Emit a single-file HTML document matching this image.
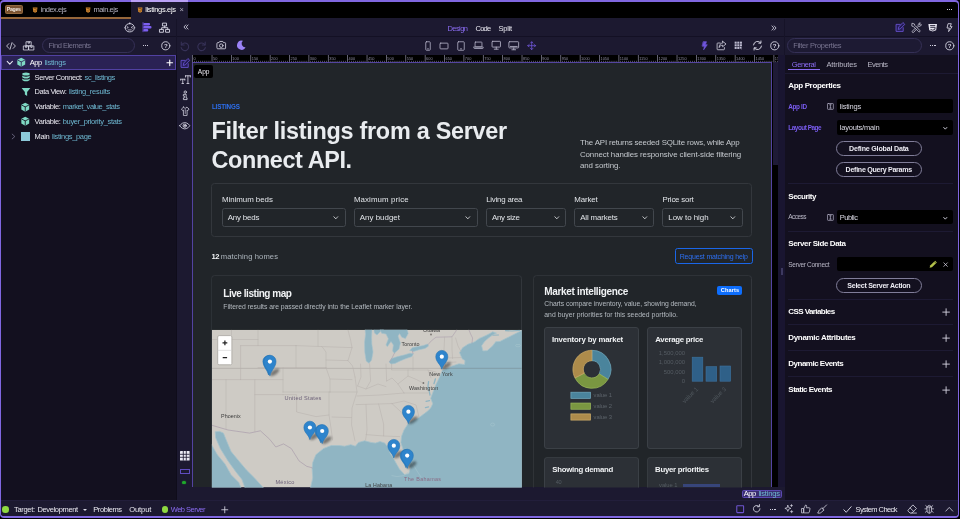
<!DOCTYPE html>
<html lang="en"><head><meta charset="utf-8"><title>listings.ejs</title>
<style>
html,body{margin:0;padding:0;background:#000;}
body{width:960px;height:519px;overflow:hidden;position:relative;font-family:"Liberation Sans",sans-serif;}
#app{position:absolute;left:0;top:0;width:960px;height:519px;overflow:hidden;will-change:transform;}
.a{position:absolute;box-sizing:border-box;}
.t{position:absolute;white-space:nowrap;line-height:1;}
.r685{left:auto !important;right:275px;}
svg{overflow:visible;}
</style></head>
<body>
<div id="app">
<div class="a" style="left:0;top:0;width:959.4px;height:518.1px;background:#8067e0;border-radius:4px;"></div>
<div class="a" style="left:1.3px;top:1.5px;width:956.3px;height:514.8px;background:#000;border-radius:3px;overflow:hidden;"></div>
<div class="a" style="left:4.70px;top:5.20px;width:18.40px;height:8.70px;background:#7a5331;border:0.6px solid #94693f;border-radius:1.5px;"></div>
<div class="a" style="left:946.80px;top:8.80px;width:1.15px;height:1.15px;background:#cfcedd;"></div>
<div class="a" style="left:949.00px;top:8.80px;width:1.15px;height:1.15px;background:#cfcedd;"></div>
<div class="a" style="left:951.20px;top:8.80px;width:1.15px;height:1.15px;background:#cfcedd;"></div>
<div class="a" style="left:1.30px;top:17.80px;width:956.30px;height:37.20px;background:#1c1930;"></div>
<div class="a" style="left:1.30px;top:17.30px;width:130.00px;height:1.40px;background:#96673a;"></div>
<div class="a" style="left:131.30px;top:1.50px;width:57.20px;height:17.50px;background:#1c1930;"></div>
<div class="a" style="left:131.30px;top:0.00px;width:57.20px;height:1.50px;background:#b9a0f5;"></div>
<div class="a" style="left:1.30px;top:35.60px;width:956.30px;height:0.80px;background:#131024;"></div>
<div class="a" style="left:175.60px;top:19.00px;width:0.80px;height:36.00px;background:#161328;"></div>
<div class="a" style="left:784.20px;top:19.00px;width:0.80px;height:36.00px;background:#161328;"></div>
<div class="a" style="left:1.30px;top:55.00px;width:174.70px;height:444.90px;background:#13101f;"></div>
<div class="a" style="left:176.00px;top:55.00px;width:16.00px;height:444.90px;background:#1c1930;"></div>
<div class="a" style="left:175.50px;top:55.00px;width:0.80px;height:444.90px;background:#0f0c1a;"></div>
<div class="a" style="left:192.00px;top:487.40px;width:593.00px;height:12.50px;background:#1c1930;"></div>
<div class="a" style="left:778.00px;top:55.00px;width:6.60px;height:432.40px;background:#191530;"></div>
<div class="a" style="left:784.60px;top:55.00px;width:173.00px;height:444.90px;background:#13101f;"></div>
<div class="a" style="left:1.30px;top:499.80px;width:956.30px;height:16.50px;background:#1c1930;border-top:0.7px solid #221e3b;border-radius:0 0 3px 3px;"></div>
<div class="a" style="left:192.00px;top:54.50px;width:586.00px;height:7.70px;background:#000;"></div>
<div class="a" style="left:191.60px;top:62.10px;width:580.90px;height:425.30px;background:#5343a0;"></div>
<div class="a" style="left:193.10px;top:63.40px;width:578.00px;height:424.00px;background:#212529;"></div>
<div class="a" style="left:772.60px;top:62.20px;width:5.40px;height:103.00px;background:#1e1a36;"></div>
<div class="a" style="left:772.60px;top:165.20px;width:5.40px;height:322.20px;background:#000;"></div>
<svg class="a" style="left:0;top:0;clip-path:inset(54.5px 182px 456px 192px);" width="960" height="519" viewBox="0 0 960 519"><rect x="192.30" y="55" width="0.7" height="7.2" fill="#8f8da2"/><text x="193.60" y="60.0" font-size="3.9" fill="#8f8da2" font-family="Liberation Sans, sans-serif">0</text><rect x="194.24" y="60.8" width="0.55" height="1.3" fill="#8a88a0"/><rect x="196.18" y="60.8" width="0.55" height="1.3" fill="#8a88a0"/><rect x="198.11" y="60.8" width="0.55" height="1.3" fill="#8a88a0"/><rect x="200.05" y="60.8" width="0.55" height="1.3" fill="#8a88a0"/><rect x="201.99" y="60.8" width="0.55" height="1.3" fill="#8a88a0"/><rect x="203.93" y="60.8" width="0.55" height="1.3" fill="#8a88a0"/><rect x="205.86" y="60.8" width="0.55" height="1.3" fill="#8a88a0"/><rect x="207.80" y="60.8" width="0.55" height="1.3" fill="#8a88a0"/><rect x="209.74" y="60.8" width="0.55" height="1.3" fill="#8a88a0"/><rect x="211.68" y="55" width="0.7" height="7.2" fill="#8f8da2"/><text x="212.98" y="60.0" font-size="3.9" fill="#8f8da2" font-family="Liberation Sans, sans-serif">50</text><rect x="213.61" y="60.8" width="0.55" height="1.3" fill="#8a88a0"/><rect x="215.55" y="60.8" width="0.55" height="1.3" fill="#8a88a0"/><rect x="217.49" y="60.8" width="0.55" height="1.3" fill="#8a88a0"/><rect x="219.43" y="60.8" width="0.55" height="1.3" fill="#8a88a0"/><rect x="221.36" y="60.8" width="0.55" height="1.3" fill="#8a88a0"/><rect x="223.30" y="60.8" width="0.55" height="1.3" fill="#8a88a0"/><rect x="225.24" y="60.8" width="0.55" height="1.3" fill="#8a88a0"/><rect x="227.18" y="60.8" width="0.55" height="1.3" fill="#8a88a0"/><rect x="229.11" y="60.8" width="0.55" height="1.3" fill="#8a88a0"/><rect x="231.05" y="55" width="0.7" height="7.2" fill="#8f8da2"/><text x="232.35" y="60.0" font-size="3.9" fill="#8f8da2" font-family="Liberation Sans, sans-serif">100</text><rect x="232.99" y="60.8" width="0.55" height="1.3" fill="#8a88a0"/><rect x="234.93" y="60.8" width="0.55" height="1.3" fill="#8a88a0"/><rect x="236.86" y="60.8" width="0.55" height="1.3" fill="#8a88a0"/><rect x="238.80" y="60.8" width="0.55" height="1.3" fill="#8a88a0"/><rect x="240.74" y="60.8" width="0.55" height="1.3" fill="#8a88a0"/><rect x="242.68" y="60.8" width="0.55" height="1.3" fill="#8a88a0"/><rect x="244.61" y="60.8" width="0.55" height="1.3" fill="#8a88a0"/><rect x="246.55" y="60.8" width="0.55" height="1.3" fill="#8a88a0"/><rect x="248.49" y="60.8" width="0.55" height="1.3" fill="#8a88a0"/><rect x="250.43" y="55" width="0.7" height="7.2" fill="#8f8da2"/><text x="251.73" y="60.0" font-size="3.9" fill="#8f8da2" font-family="Liberation Sans, sans-serif">150</text><rect x="252.36" y="60.8" width="0.55" height="1.3" fill="#8a88a0"/><rect x="254.30" y="60.8" width="0.55" height="1.3" fill="#8a88a0"/><rect x="256.24" y="60.8" width="0.55" height="1.3" fill="#8a88a0"/><rect x="258.18" y="60.8" width="0.55" height="1.3" fill="#8a88a0"/><rect x="260.11" y="60.8" width="0.55" height="1.3" fill="#8a88a0"/><rect x="262.05" y="60.8" width="0.55" height="1.3" fill="#8a88a0"/><rect x="263.99" y="60.8" width="0.55" height="1.3" fill="#8a88a0"/><rect x="265.93" y="60.8" width="0.55" height="1.3" fill="#8a88a0"/><rect x="267.86" y="60.8" width="0.55" height="1.3" fill="#8a88a0"/><rect x="269.80" y="55" width="0.7" height="7.2" fill="#8f8da2"/><text x="271.10" y="60.0" font-size="3.9" fill="#8f8da2" font-family="Liberation Sans, sans-serif">200</text><rect x="271.74" y="60.8" width="0.55" height="1.3" fill="#8a88a0"/><rect x="273.68" y="60.8" width="0.55" height="1.3" fill="#8a88a0"/><rect x="275.61" y="60.8" width="0.55" height="1.3" fill="#8a88a0"/><rect x="277.55" y="60.8" width="0.55" height="1.3" fill="#8a88a0"/><rect x="279.49" y="60.8" width="0.55" height="1.3" fill="#8a88a0"/><rect x="281.43" y="60.8" width="0.55" height="1.3" fill="#8a88a0"/><rect x="283.36" y="60.8" width="0.55" height="1.3" fill="#8a88a0"/><rect x="285.30" y="60.8" width="0.55" height="1.3" fill="#8a88a0"/><rect x="287.24" y="60.8" width="0.55" height="1.3" fill="#8a88a0"/><rect x="289.18" y="55" width="0.7" height="7.2" fill="#8f8da2"/><text x="290.48" y="60.0" font-size="3.9" fill="#8f8da2" font-family="Liberation Sans, sans-serif">250</text><rect x="291.11" y="60.8" width="0.55" height="1.3" fill="#8a88a0"/><rect x="293.05" y="60.8" width="0.55" height="1.3" fill="#8a88a0"/><rect x="294.99" y="60.8" width="0.55" height="1.3" fill="#8a88a0"/><rect x="296.93" y="60.8" width="0.55" height="1.3" fill="#8a88a0"/><rect x="298.86" y="60.8" width="0.55" height="1.3" fill="#8a88a0"/><rect x="300.80" y="60.8" width="0.55" height="1.3" fill="#8a88a0"/><rect x="302.74" y="60.8" width="0.55" height="1.3" fill="#8a88a0"/><rect x="304.68" y="60.8" width="0.55" height="1.3" fill="#8a88a0"/><rect x="306.61" y="60.8" width="0.55" height="1.3" fill="#8a88a0"/><rect x="308.55" y="55" width="0.7" height="7.2" fill="#8f8da2"/><text x="309.85" y="60.0" font-size="3.9" fill="#8f8da2" font-family="Liberation Sans, sans-serif">300</text><rect x="310.49" y="60.8" width="0.55" height="1.3" fill="#8a88a0"/><rect x="312.43" y="60.8" width="0.55" height="1.3" fill="#8a88a0"/><rect x="314.36" y="60.8" width="0.55" height="1.3" fill="#8a88a0"/><rect x="316.30" y="60.8" width="0.55" height="1.3" fill="#8a88a0"/><rect x="318.24" y="60.8" width="0.55" height="1.3" fill="#8a88a0"/><rect x="320.18" y="60.8" width="0.55" height="1.3" fill="#8a88a0"/><rect x="322.11" y="60.8" width="0.55" height="1.3" fill="#8a88a0"/><rect x="324.05" y="60.8" width="0.55" height="1.3" fill="#8a88a0"/><rect x="325.99" y="60.8" width="0.55" height="1.3" fill="#8a88a0"/><rect x="327.93" y="55" width="0.7" height="7.2" fill="#8f8da2"/><text x="329.23" y="60.0" font-size="3.9" fill="#8f8da2" font-family="Liberation Sans, sans-serif">350</text><rect x="329.86" y="60.8" width="0.55" height="1.3" fill="#8a88a0"/><rect x="331.80" y="60.8" width="0.55" height="1.3" fill="#8a88a0"/><rect x="333.74" y="60.8" width="0.55" height="1.3" fill="#8a88a0"/><rect x="335.68" y="60.8" width="0.55" height="1.3" fill="#8a88a0"/><rect x="337.61" y="60.8" width="0.55" height="1.3" fill="#8a88a0"/><rect x="339.55" y="60.8" width="0.55" height="1.3" fill="#8a88a0"/><rect x="341.49" y="60.8" width="0.55" height="1.3" fill="#8a88a0"/><rect x="343.43" y="60.8" width="0.55" height="1.3" fill="#8a88a0"/><rect x="345.36" y="60.8" width="0.55" height="1.3" fill="#8a88a0"/><rect x="347.30" y="55" width="0.7" height="7.2" fill="#8f8da2"/><text x="348.60" y="60.0" font-size="3.9" fill="#8f8da2" font-family="Liberation Sans, sans-serif">400</text><rect x="349.24" y="60.8" width="0.55" height="1.3" fill="#8a88a0"/><rect x="351.18" y="60.8" width="0.55" height="1.3" fill="#8a88a0"/><rect x="353.11" y="60.8" width="0.55" height="1.3" fill="#8a88a0"/><rect x="355.05" y="60.8" width="0.55" height="1.3" fill="#8a88a0"/><rect x="356.99" y="60.8" width="0.55" height="1.3" fill="#8a88a0"/><rect x="358.93" y="60.8" width="0.55" height="1.3" fill="#8a88a0"/><rect x="360.86" y="60.8" width="0.55" height="1.3" fill="#8a88a0"/><rect x="362.80" y="60.8" width="0.55" height="1.3" fill="#8a88a0"/><rect x="364.74" y="60.8" width="0.55" height="1.3" fill="#8a88a0"/><rect x="366.68" y="55" width="0.7" height="7.2" fill="#8f8da2"/><text x="367.98" y="60.0" font-size="3.9" fill="#8f8da2" font-family="Liberation Sans, sans-serif">450</text><rect x="368.61" y="60.8" width="0.55" height="1.3" fill="#8a88a0"/><rect x="370.55" y="60.8" width="0.55" height="1.3" fill="#8a88a0"/><rect x="372.49" y="60.8" width="0.55" height="1.3" fill="#8a88a0"/><rect x="374.43" y="60.8" width="0.55" height="1.3" fill="#8a88a0"/><rect x="376.36" y="60.8" width="0.55" height="1.3" fill="#8a88a0"/><rect x="378.30" y="60.8" width="0.55" height="1.3" fill="#8a88a0"/><rect x="380.24" y="60.8" width="0.55" height="1.3" fill="#8a88a0"/><rect x="382.18" y="60.8" width="0.55" height="1.3" fill="#8a88a0"/><rect x="384.11" y="60.8" width="0.55" height="1.3" fill="#8a88a0"/><rect x="386.05" y="55" width="0.7" height="7.2" fill="#8f8da2"/><text x="387.35" y="60.0" font-size="3.9" fill="#8f8da2" font-family="Liberation Sans, sans-serif">500</text><rect x="387.99" y="60.8" width="0.55" height="1.3" fill="#8a88a0"/><rect x="389.93" y="60.8" width="0.55" height="1.3" fill="#8a88a0"/><rect x="391.86" y="60.8" width="0.55" height="1.3" fill="#8a88a0"/><rect x="393.80" y="60.8" width="0.55" height="1.3" fill="#8a88a0"/><rect x="395.74" y="60.8" width="0.55" height="1.3" fill="#8a88a0"/><rect x="397.68" y="60.8" width="0.55" height="1.3" fill="#8a88a0"/><rect x="399.61" y="60.8" width="0.55" height="1.3" fill="#8a88a0"/><rect x="401.55" y="60.8" width="0.55" height="1.3" fill="#8a88a0"/><rect x="403.49" y="60.8" width="0.55" height="1.3" fill="#8a88a0"/><rect x="405.43" y="55" width="0.7" height="7.2" fill="#8f8da2"/><text x="406.73" y="60.0" font-size="3.9" fill="#8f8da2" font-family="Liberation Sans, sans-serif">550</text><rect x="407.36" y="60.8" width="0.55" height="1.3" fill="#8a88a0"/><rect x="409.30" y="60.8" width="0.55" height="1.3" fill="#8a88a0"/><rect x="411.24" y="60.8" width="0.55" height="1.3" fill="#8a88a0"/><rect x="413.18" y="60.8" width="0.55" height="1.3" fill="#8a88a0"/><rect x="415.11" y="60.8" width="0.55" height="1.3" fill="#8a88a0"/><rect x="417.05" y="60.8" width="0.55" height="1.3" fill="#8a88a0"/><rect x="418.99" y="60.8" width="0.55" height="1.3" fill="#8a88a0"/><rect x="420.93" y="60.8" width="0.55" height="1.3" fill="#8a88a0"/><rect x="422.86" y="60.8" width="0.55" height="1.3" fill="#8a88a0"/><rect x="424.80" y="55" width="0.7" height="7.2" fill="#8f8da2"/><text x="426.10" y="60.0" font-size="3.9" fill="#8f8da2" font-family="Liberation Sans, sans-serif">600</text><rect x="426.74" y="60.8" width="0.55" height="1.3" fill="#8a88a0"/><rect x="428.68" y="60.8" width="0.55" height="1.3" fill="#8a88a0"/><rect x="430.61" y="60.8" width="0.55" height="1.3" fill="#8a88a0"/><rect x="432.55" y="60.8" width="0.55" height="1.3" fill="#8a88a0"/><rect x="434.49" y="60.8" width="0.55" height="1.3" fill="#8a88a0"/><rect x="436.43" y="60.8" width="0.55" height="1.3" fill="#8a88a0"/><rect x="438.36" y="60.8" width="0.55" height="1.3" fill="#8a88a0"/><rect x="440.30" y="60.8" width="0.55" height="1.3" fill="#8a88a0"/><rect x="442.24" y="60.8" width="0.55" height="1.3" fill="#8a88a0"/><rect x="444.18" y="55" width="0.7" height="7.2" fill="#8f8da2"/><text x="445.48" y="60.0" font-size="3.9" fill="#8f8da2" font-family="Liberation Sans, sans-serif">650</text><rect x="446.11" y="60.8" width="0.55" height="1.3" fill="#8a88a0"/><rect x="448.05" y="60.8" width="0.55" height="1.3" fill="#8a88a0"/><rect x="449.99" y="60.8" width="0.55" height="1.3" fill="#8a88a0"/><rect x="451.93" y="60.8" width="0.55" height="1.3" fill="#8a88a0"/><rect x="453.86" y="60.8" width="0.55" height="1.3" fill="#8a88a0"/><rect x="455.80" y="60.8" width="0.55" height="1.3" fill="#8a88a0"/><rect x="457.74" y="60.8" width="0.55" height="1.3" fill="#8a88a0"/><rect x="459.68" y="60.8" width="0.55" height="1.3" fill="#8a88a0"/><rect x="461.61" y="60.8" width="0.55" height="1.3" fill="#8a88a0"/><rect x="463.55" y="55" width="0.7" height="7.2" fill="#8f8da2"/><text x="464.85" y="60.0" font-size="3.9" fill="#8f8da2" font-family="Liberation Sans, sans-serif">700</text><rect x="465.49" y="60.8" width="0.55" height="1.3" fill="#8a88a0"/><rect x="467.43" y="60.8" width="0.55" height="1.3" fill="#8a88a0"/><rect x="469.36" y="60.8" width="0.55" height="1.3" fill="#8a88a0"/><rect x="471.30" y="60.8" width="0.55" height="1.3" fill="#8a88a0"/><rect x="473.24" y="60.8" width="0.55" height="1.3" fill="#8a88a0"/><rect x="475.18" y="60.8" width="0.55" height="1.3" fill="#8a88a0"/><rect x="477.11" y="60.8" width="0.55" height="1.3" fill="#8a88a0"/><rect x="479.05" y="60.8" width="0.55" height="1.3" fill="#8a88a0"/><rect x="480.99" y="60.8" width="0.55" height="1.3" fill="#8a88a0"/><rect x="482.93" y="55" width="0.7" height="7.2" fill="#8f8da2"/><text x="484.23" y="60.0" font-size="3.9" fill="#8f8da2" font-family="Liberation Sans, sans-serif">750</text><rect x="484.86" y="60.8" width="0.55" height="1.3" fill="#8a88a0"/><rect x="486.80" y="60.8" width="0.55" height="1.3" fill="#8a88a0"/><rect x="488.74" y="60.8" width="0.55" height="1.3" fill="#8a88a0"/><rect x="490.68" y="60.8" width="0.55" height="1.3" fill="#8a88a0"/><rect x="492.61" y="60.8" width="0.55" height="1.3" fill="#8a88a0"/><rect x="494.55" y="60.8" width="0.55" height="1.3" fill="#8a88a0"/><rect x="496.49" y="60.8" width="0.55" height="1.3" fill="#8a88a0"/><rect x="498.43" y="60.8" width="0.55" height="1.3" fill="#8a88a0"/><rect x="500.36" y="60.8" width="0.55" height="1.3" fill="#8a88a0"/><rect x="502.30" y="55" width="0.7" height="7.2" fill="#8f8da2"/><text x="503.60" y="60.0" font-size="3.9" fill="#8f8da2" font-family="Liberation Sans, sans-serif">800</text><rect x="504.24" y="60.8" width="0.55" height="1.3" fill="#8a88a0"/><rect x="506.18" y="60.8" width="0.55" height="1.3" fill="#8a88a0"/><rect x="508.11" y="60.8" width="0.55" height="1.3" fill="#8a88a0"/><rect x="510.05" y="60.8" width="0.55" height="1.3" fill="#8a88a0"/><rect x="511.99" y="60.8" width="0.55" height="1.3" fill="#8a88a0"/><rect x="513.92" y="60.8" width="0.55" height="1.3" fill="#8a88a0"/><rect x="515.86" y="60.8" width="0.55" height="1.3" fill="#8a88a0"/><rect x="517.80" y="60.8" width="0.55" height="1.3" fill="#8a88a0"/><rect x="519.74" y="60.8" width="0.55" height="1.3" fill="#8a88a0"/><rect x="521.67" y="55" width="0.7" height="7.2" fill="#8f8da2"/><text x="522.97" y="60.0" font-size="3.9" fill="#8f8da2" font-family="Liberation Sans, sans-serif">850</text><rect x="523.61" y="60.8" width="0.55" height="1.3" fill="#8a88a0"/><rect x="525.55" y="60.8" width="0.55" height="1.3" fill="#8a88a0"/><rect x="527.49" y="60.8" width="0.55" height="1.3" fill="#8a88a0"/><rect x="529.42" y="60.8" width="0.55" height="1.3" fill="#8a88a0"/><rect x="531.36" y="60.8" width="0.55" height="1.3" fill="#8a88a0"/><rect x="533.30" y="60.8" width="0.55" height="1.3" fill="#8a88a0"/><rect x="535.24" y="60.8" width="0.55" height="1.3" fill="#8a88a0"/><rect x="537.17" y="60.8" width="0.55" height="1.3" fill="#8a88a0"/><rect x="539.11" y="60.8" width="0.55" height="1.3" fill="#8a88a0"/><rect x="541.05" y="55" width="0.7" height="7.2" fill="#8f8da2"/><text x="542.35" y="60.0" font-size="3.9" fill="#8f8da2" font-family="Liberation Sans, sans-serif">900</text><rect x="542.99" y="60.8" width="0.55" height="1.3" fill="#8a88a0"/><rect x="544.92" y="60.8" width="0.55" height="1.3" fill="#8a88a0"/><rect x="546.86" y="60.8" width="0.55" height="1.3" fill="#8a88a0"/><rect x="548.80" y="60.8" width="0.55" height="1.3" fill="#8a88a0"/><rect x="550.74" y="60.8" width="0.55" height="1.3" fill="#8a88a0"/><rect x="552.67" y="60.8" width="0.55" height="1.3" fill="#8a88a0"/><rect x="554.61" y="60.8" width="0.55" height="1.3" fill="#8a88a0"/><rect x="556.55" y="60.8" width="0.55" height="1.3" fill="#8a88a0"/><rect x="558.49" y="60.8" width="0.55" height="1.3" fill="#8a88a0"/><rect x="560.42" y="55" width="0.7" height="7.2" fill="#8f8da2"/><text x="561.72" y="60.0" font-size="3.9" fill="#8f8da2" font-family="Liberation Sans, sans-serif">950</text><rect x="562.36" y="60.8" width="0.55" height="1.3" fill="#8a88a0"/><rect x="564.30" y="60.8" width="0.55" height="1.3" fill="#8a88a0"/><rect x="566.24" y="60.8" width="0.55" height="1.3" fill="#8a88a0"/><rect x="568.17" y="60.8" width="0.55" height="1.3" fill="#8a88a0"/><rect x="570.11" y="60.8" width="0.55" height="1.3" fill="#8a88a0"/><rect x="572.05" y="60.8" width="0.55" height="1.3" fill="#8a88a0"/><rect x="573.99" y="60.8" width="0.55" height="1.3" fill="#8a88a0"/><rect x="575.92" y="60.8" width="0.55" height="1.3" fill="#8a88a0"/><rect x="577.86" y="60.8" width="0.55" height="1.3" fill="#8a88a0"/><rect x="579.80" y="55" width="0.7" height="7.2" fill="#8f8da2"/><text x="581.10" y="60.0" font-size="3.9" fill="#8f8da2" font-family="Liberation Sans, sans-serif">1000</text><rect x="581.74" y="60.8" width="0.55" height="1.3" fill="#8a88a0"/><rect x="583.67" y="60.8" width="0.55" height="1.3" fill="#8a88a0"/><rect x="585.61" y="60.8" width="0.55" height="1.3" fill="#8a88a0"/><rect x="587.55" y="60.8" width="0.55" height="1.3" fill="#8a88a0"/><rect x="589.49" y="60.8" width="0.55" height="1.3" fill="#8a88a0"/><rect x="591.42" y="60.8" width="0.55" height="1.3" fill="#8a88a0"/><rect x="593.36" y="60.8" width="0.55" height="1.3" fill="#8a88a0"/><rect x="595.30" y="60.8" width="0.55" height="1.3" fill="#8a88a0"/><rect x="597.24" y="60.8" width="0.55" height="1.3" fill="#8a88a0"/><rect x="599.17" y="55" width="0.7" height="7.2" fill="#8f8da2"/><text x="600.47" y="60.0" font-size="3.9" fill="#8f8da2" font-family="Liberation Sans, sans-serif">1050</text><rect x="601.11" y="60.8" width="0.55" height="1.3" fill="#8a88a0"/><rect x="603.05" y="60.8" width="0.55" height="1.3" fill="#8a88a0"/><rect x="604.99" y="60.8" width="0.55" height="1.3" fill="#8a88a0"/><rect x="606.92" y="60.8" width="0.55" height="1.3" fill="#8a88a0"/><rect x="608.86" y="60.8" width="0.55" height="1.3" fill="#8a88a0"/><rect x="610.80" y="60.8" width="0.55" height="1.3" fill="#8a88a0"/><rect x="612.74" y="60.8" width="0.55" height="1.3" fill="#8a88a0"/><rect x="614.67" y="60.8" width="0.55" height="1.3" fill="#8a88a0"/><rect x="616.61" y="60.8" width="0.55" height="1.3" fill="#8a88a0"/><rect x="618.55" y="55" width="0.7" height="7.2" fill="#8f8da2"/><text x="619.85" y="60.0" font-size="3.9" fill="#8f8da2" font-family="Liberation Sans, sans-serif">1100</text><rect x="620.49" y="60.8" width="0.55" height="1.3" fill="#8a88a0"/><rect x="622.42" y="60.8" width="0.55" height="1.3" fill="#8a88a0"/><rect x="624.36" y="60.8" width="0.55" height="1.3" fill="#8a88a0"/><rect x="626.30" y="60.8" width="0.55" height="1.3" fill="#8a88a0"/><rect x="628.24" y="60.8" width="0.55" height="1.3" fill="#8a88a0"/><rect x="630.17" y="60.8" width="0.55" height="1.3" fill="#8a88a0"/><rect x="632.11" y="60.8" width="0.55" height="1.3" fill="#8a88a0"/><rect x="634.05" y="60.8" width="0.55" height="1.3" fill="#8a88a0"/><rect x="635.99" y="60.8" width="0.55" height="1.3" fill="#8a88a0"/><rect x="637.92" y="55" width="0.7" height="7.2" fill="#8f8da2"/><text x="639.22" y="60.0" font-size="3.9" fill="#8f8da2" font-family="Liberation Sans, sans-serif">1150</text><rect x="639.86" y="60.8" width="0.55" height="1.3" fill="#8a88a0"/><rect x="641.80" y="60.8" width="0.55" height="1.3" fill="#8a88a0"/><rect x="643.74" y="60.8" width="0.55" height="1.3" fill="#8a88a0"/><rect x="645.67" y="60.8" width="0.55" height="1.3" fill="#8a88a0"/><rect x="647.61" y="60.8" width="0.55" height="1.3" fill="#8a88a0"/><rect x="649.55" y="60.8" width="0.55" height="1.3" fill="#8a88a0"/><rect x="651.49" y="60.8" width="0.55" height="1.3" fill="#8a88a0"/><rect x="653.42" y="60.8" width="0.55" height="1.3" fill="#8a88a0"/><rect x="655.36" y="60.8" width="0.55" height="1.3" fill="#8a88a0"/><rect x="657.30" y="55" width="0.7" height="7.2" fill="#8f8da2"/><text x="658.60" y="60.0" font-size="3.9" fill="#8f8da2" font-family="Liberation Sans, sans-serif">1200</text><rect x="659.24" y="60.8" width="0.55" height="1.3" fill="#8a88a0"/><rect x="661.17" y="60.8" width="0.55" height="1.3" fill="#8a88a0"/><rect x="663.11" y="60.8" width="0.55" height="1.3" fill="#8a88a0"/><rect x="665.05" y="60.8" width="0.55" height="1.3" fill="#8a88a0"/><rect x="666.99" y="60.8" width="0.55" height="1.3" fill="#8a88a0"/><rect x="668.92" y="60.8" width="0.55" height="1.3" fill="#8a88a0"/><rect x="670.86" y="60.8" width="0.55" height="1.3" fill="#8a88a0"/><rect x="672.80" y="60.8" width="0.55" height="1.3" fill="#8a88a0"/><rect x="674.74" y="60.8" width="0.55" height="1.3" fill="#8a88a0"/><rect x="676.67" y="55" width="0.7" height="7.2" fill="#8f8da2"/><text x="677.97" y="60.0" font-size="3.9" fill="#8f8da2" font-family="Liberation Sans, sans-serif">1250</text><rect x="678.61" y="60.8" width="0.55" height="1.3" fill="#8a88a0"/><rect x="680.55" y="60.8" width="0.55" height="1.3" fill="#8a88a0"/><rect x="682.49" y="60.8" width="0.55" height="1.3" fill="#8a88a0"/><rect x="684.42" y="60.8" width="0.55" height="1.3" fill="#8a88a0"/><rect x="686.36" y="60.8" width="0.55" height="1.3" fill="#8a88a0"/><rect x="688.30" y="60.8" width="0.55" height="1.3" fill="#8a88a0"/><rect x="690.24" y="60.8" width="0.55" height="1.3" fill="#8a88a0"/><rect x="692.17" y="60.8" width="0.55" height="1.3" fill="#8a88a0"/><rect x="694.11" y="60.8" width="0.55" height="1.3" fill="#8a88a0"/><rect x="696.05" y="55" width="0.7" height="7.2" fill="#8f8da2"/><text x="697.35" y="60.0" font-size="3.9" fill="#8f8da2" font-family="Liberation Sans, sans-serif">1300</text><rect x="697.99" y="60.8" width="0.55" height="1.3" fill="#8a88a0"/><rect x="699.92" y="60.8" width="0.55" height="1.3" fill="#8a88a0"/><rect x="701.86" y="60.8" width="0.55" height="1.3" fill="#8a88a0"/><rect x="703.80" y="60.8" width="0.55" height="1.3" fill="#8a88a0"/><rect x="705.74" y="60.8" width="0.55" height="1.3" fill="#8a88a0"/><rect x="707.67" y="60.8" width="0.55" height="1.3" fill="#8a88a0"/><rect x="709.61" y="60.8" width="0.55" height="1.3" fill="#8a88a0"/><rect x="711.55" y="60.8" width="0.55" height="1.3" fill="#8a88a0"/><rect x="713.49" y="60.8" width="0.55" height="1.3" fill="#8a88a0"/><rect x="715.42" y="55" width="0.7" height="7.2" fill="#8f8da2"/><text x="716.72" y="60.0" font-size="3.9" fill="#8f8da2" font-family="Liberation Sans, sans-serif">1350</text><rect x="717.36" y="60.8" width="0.55" height="1.3" fill="#8a88a0"/><rect x="719.30" y="60.8" width="0.55" height="1.3" fill="#8a88a0"/><rect x="721.24" y="60.8" width="0.55" height="1.3" fill="#8a88a0"/><rect x="723.17" y="60.8" width="0.55" height="1.3" fill="#8a88a0"/><rect x="725.11" y="60.8" width="0.55" height="1.3" fill="#8a88a0"/><rect x="727.05" y="60.8" width="0.55" height="1.3" fill="#8a88a0"/><rect x="728.99" y="60.8" width="0.55" height="1.3" fill="#8a88a0"/><rect x="730.92" y="60.8" width="0.55" height="1.3" fill="#8a88a0"/><rect x="732.86" y="60.8" width="0.55" height="1.3" fill="#8a88a0"/><rect x="734.80" y="55" width="0.7" height="7.2" fill="#8f8da2"/><text x="736.10" y="60.0" font-size="3.9" fill="#8f8da2" font-family="Liberation Sans, sans-serif">1400</text><rect x="736.74" y="60.8" width="0.55" height="1.3" fill="#8a88a0"/><rect x="738.67" y="60.8" width="0.55" height="1.3" fill="#8a88a0"/><rect x="740.61" y="60.8" width="0.55" height="1.3" fill="#8a88a0"/><rect x="742.55" y="60.8" width="0.55" height="1.3" fill="#8a88a0"/><rect x="744.49" y="60.8" width="0.55" height="1.3" fill="#8a88a0"/><rect x="746.42" y="60.8" width="0.55" height="1.3" fill="#8a88a0"/><rect x="748.36" y="60.8" width="0.55" height="1.3" fill="#8a88a0"/><rect x="750.30" y="60.8" width="0.55" height="1.3" fill="#8a88a0"/><rect x="752.24" y="60.8" width="0.55" height="1.3" fill="#8a88a0"/><rect x="754.17" y="55" width="0.7" height="7.2" fill="#8f8da2"/><text x="755.47" y="60.0" font-size="3.9" fill="#8f8da2" font-family="Liberation Sans, sans-serif">1450</text><rect x="756.11" y="60.8" width="0.55" height="1.3" fill="#8a88a0"/><rect x="758.05" y="60.8" width="0.55" height="1.3" fill="#8a88a0"/><rect x="759.99" y="60.8" width="0.55" height="1.3" fill="#8a88a0"/><rect x="761.92" y="60.8" width="0.55" height="1.3" fill="#8a88a0"/><rect x="763.86" y="60.8" width="0.55" height="1.3" fill="#8a88a0"/><rect x="765.80" y="60.8" width="0.55" height="1.3" fill="#8a88a0"/><rect x="767.74" y="60.8" width="0.55" height="1.3" fill="#8a88a0"/><rect x="769.67" y="60.8" width="0.55" height="1.3" fill="#8a88a0"/><rect x="771.61" y="60.8" width="0.55" height="1.3" fill="#8a88a0"/><rect x="773.55" y="55" width="0.7" height="7.2" fill="#8f8da2"/><text x="774.85" y="60.0" font-size="3.9" fill="#8f8da2" font-family="Liberation Sans, sans-serif">1500</text><rect x="775.49" y="60.8" width="0.55" height="1.3" fill="#8a88a0"/><rect x="777.42" y="60.8" width="0.55" height="1.3" fill="#8a88a0"/></svg>
<div class="a" style="left:41.70px;top:38.20px;width:93.30px;height:14.60px;border:0.8px solid #353056;border-radius:7.5px;background:#1d1a33;"></div>
<div class="a" style="left:142.90px;top:44.90px;width:1.15px;height:1.15px;background:#cfcedd;"></div>
<div class="a" style="left:145.10px;top:44.90px;width:1.15px;height:1.15px;background:#cfcedd;"></div>
<div class="a" style="left:147.30px;top:44.90px;width:1.15px;height:1.15px;background:#cfcedd;"></div>
<div class="a" style="left:1.30px;top:55.00px;width:174.70px;height:15.00px;background:#2a2254;border:0.9px solid #5141a2;"></div>
<div class="a" style="left:194.00px;top:64.80px;width:19.10px;height:12.80px;background:#000;border-radius:2px;"></div>
<div class="a" style="left:786.90px;top:38.40px;width:135.30px;height:14.50px;border:0.8px solid #353056;border-radius:7.5px;background:#1d1a33;"></div>
<div class="a" style="left:930.00px;top:44.90px;width:1.15px;height:1.15px;background:#cfcedd;"></div>
<div class="a" style="left:932.20px;top:44.90px;width:1.15px;height:1.15px;background:#cfcedd;"></div>
<div class="a" style="left:934.40px;top:44.90px;width:1.15px;height:1.15px;background:#cfcedd;"></div>
<div class="a" style="left:787.50px;top:68.90px;width:32.50px;height:1.00px;background:#8b6cf2;"></div>
<div class="a" style="left:785.00px;top:72.50px;width:172.60px;height:0.70px;background:#1d1a33;"></div>
<div class="a" style="left:836.50px;top:99.00px;width:116.50px;height:14.20px;background:#000;border-radius:2px;"></div>
<div class="a" style="left:836.50px;top:119.80px;width:116.50px;height:15.20px;background:#000;border-radius:2px;"></div>
<div class="a" style="left:836.00px;top:141.20px;width:85.80px;height:14.70px;border:0.9px solid #807d99;border-radius:8px;"></div>
<div class="a" style="left:836.00px;top:162.40px;width:85.80px;height:14.90px;border:0.9px solid #807d99;border-radius:8px;"></div>
<div class="a" style="left:788.30px;top:183.00px;width:164.70px;height:0.70px;background:#1d1a33;"></div>
<div class="a" style="left:836.50px;top:209.80px;width:116.50px;height:14.20px;background:#000;border-radius:2px;"></div>
<div class="a" style="left:788.30px;top:231.30px;width:164.70px;height:0.70px;background:#1d1a33;"></div>
<div class="a" style="left:836.50px;top:257.40px;width:116.50px;height:13.90px;background:#000;border-radius:2px;"></div>
<div class="a" style="left:836.00px;top:277.90px;width:85.80px;height:14.90px;border:0.9px solid #807d99;border-radius:8px;"></div>
<div class="a" style="left:788.30px;top:299.10px;width:164.70px;height:0.70px;background:#1d1a33;"></div>
<div class="a" style="left:788.30px;top:324.40px;width:164.70px;height:0.70px;background:#1d1a33;"></div>
<div class="a" style="left:788.30px;top:350.40px;width:164.70px;height:0.70px;background:#1d1a33;"></div>
<div class="a" style="left:788.30px;top:376.40px;width:164.70px;height:0.70px;background:#1d1a33;"></div>
<div class="a" style="left:770.00px;top:508.50px;width:1.15px;height:1.15px;background:#cfcedd;"></div>
<div class="a" style="left:772.20px;top:508.50px;width:1.15px;height:1.15px;background:#cfcedd;"></div>
<div class="a" style="left:774.40px;top:508.50px;width:1.15px;height:1.15px;background:#cfcedd;"></div>
<div class="a" style="left:742.00px;top:489.90px;width:39.80px;height:8.30px;background:#392d70;border:0.7px solid #5b49b0;border-radius:1.5px;"></div>
<svg class="a" style="left:32.20px;top:6.60px;" width="6.2" height="6.2" viewBox="0 0 16 16" fill="none" stroke="#d6d5e3" stroke-width="1.4" stroke-linecap="round" stroke-linejoin="round"><path d="M2 1h12l-1.2 11.5L8 15l-4.8-2.5z" fill="#d98b30" stroke="none"/><path d="M5 4h6l-.3 5.5L8 11 5.3 9.5" stroke="#5a3a12" stroke-width="1.6" fill="none"/></svg>
<svg class="a" style="left:84.60px;top:6.60px;" width="6.2" height="6.2" viewBox="0 0 16 16" fill="none" stroke="#d6d5e3" stroke-width="1.4" stroke-linecap="round" stroke-linejoin="round"><path d="M2 1h12l-1.2 11.5L8 15l-4.8-2.5z" fill="#d98b30" stroke="none"/><path d="M5 4h6l-.3 5.5L8 11 5.3 9.5" stroke="#5a3a12" stroke-width="1.6" fill="none"/></svg>
<svg class="a" style="left:136.70px;top:6.60px;" width="6.2" height="6.2" viewBox="0 0 16 16" fill="none" stroke="#d6d5e3" stroke-width="1.4" stroke-linecap="round" stroke-linejoin="round"><path d="M2 1h12l-1.2 11.5L8 15l-4.8-2.5z" fill="#d98b30" stroke="none"/><path d="M5 4h6l-.3 5.5L8 11 5.3 9.5" stroke="#5a3a12" stroke-width="1.6" fill="none"/></svg>
<svg class="a" style="left:124.05px;top:21.85px;" width="11.5" height="11.5" viewBox="0 0 16 16" fill="none" stroke="#d6d5e3" stroke-width="1.25" stroke-linecap="round" stroke-linejoin="round"><path d="M8 2.2c3.600 0 6.300 2.400 6.300 5.800S11.600 13.800 8 13.800 1.700 11.400 1.700 8 4.400 2.200 8 2.200z"/><path d="M4.200 6.400l1.800 1.200-1.800 1M11.800 6.400L10 7.600l1.800 1M5.800 11h4.400M8 2.200V1M1.700 8H.8M15.200 8h-.9" stroke-width="1.050"/></svg>
<svg class="a" style="left:141.70px;top:22.30px;" width="10.4" height="10.4" viewBox="0 0 16 16" fill="none" stroke="#6a50d8" stroke-width="1.0" stroke-linecap="round" stroke-linejoin="round"><rect x="2" y="1.400" width="10.400" height="3.800" rx="1.600" fill="#7c5ff0" stroke="none"/><rect x="2" y="6.100" width="12.600" height="3.800" rx="1.600" fill="#7c5ff0" stroke="none"/><rect x="2" y="10.800" width="7.600" height="3.800" rx="1.600" fill="#7c5ff0" stroke="none"/><path d="M1.600 1v14" stroke-width="1.400"/></svg>
<svg class="a" style="left:158.60px;top:21.80px;" width="11.4" height="11.4" viewBox="0 0 16 16" fill="none" stroke="#d6d5e3" stroke-width="1.3" stroke-linecap="round" stroke-linejoin="round"><rect x="5.400" y="1.600" width="5.200" height="4"/><rect x="1.200" y="10.400" width="5" height="4"/><rect x="9.800" y="10.400" width="5" height="4"/><path d="M8 5.600V8M3.700 10.400V8h8.600v2.400"/></svg>
<svg class="a" style="left:182.60px;top:24.40px;" width="6.0" height="6.0" viewBox="0 0 16 16" fill="none" stroke="#d6d5e3" stroke-width="2.2" stroke-linecap="round" stroke-linejoin="round"><path d="M7.5 2.5L2.5 8l5 5.5M13.5 2.5L8.5 8l5 5.5"/></svg>
<svg class="a" style="left:771.40px;top:24.50px;" width="6.0" height="6.0" viewBox="0 0 16 16" fill="none" stroke="#d6d5e3" stroke-width="2.2" stroke-linecap="round" stroke-linejoin="round"><path d="M2.5 2.5L7.5 8l-5 5.5M8.5 2.5L13.5 8l-5 5.5"/></svg>
<svg class="a" style="left:6.20px;top:40.70px;" width="10" height="10" viewBox="0 0 16 16" fill="none" stroke="#d6d5e3" stroke-width="1.35" stroke-linecap="round" stroke-linejoin="round"><path d="M4.6 4.2L1 8l3.6 3.8M11.4 4.2L15 8l-3.6 3.8M9.6 2.6L6.4 13.4"/></svg>
<svg class="a" style="left:22.80px;top:40.10px;" width="11.6" height="11.6" viewBox="0 0 16 16" fill="none" stroke="#d6d5e3" stroke-width="1.1" stroke-linecap="round" stroke-linejoin="round"><rect x="1" y="8.2" width="6.6" height="5.6"/><rect x="8.4" y="8.2" width="6.6" height="5.6"/><rect x="4.7" y="2.4" width="6.6" height="5.6"/><path d="M3.4 8.2v2h1.8v-2M10.8 8.2v2h1.8v-2M7.1 2.4v2h1.8v-2"/></svg>
<svg class="a" style="left:160.90px;top:40.70px;" width="9.6" height="9.6" viewBox="0 0 16 16" fill="none" stroke="#d6d5e3" stroke-width="1.45" stroke-linecap="round" stroke-linejoin="round"><circle cx="8" cy="8" r="6.8"/></svg>
<svg class="a" style="left:769.60px;top:40.80px;" width="9.6" height="9.6" viewBox="0 0 16 16" fill="none" stroke="#d6d5e3" stroke-width="1.45" stroke-linecap="round" stroke-linejoin="round"><circle cx="8" cy="8" r="6.8"/></svg>
<svg class="a" style="left:944.60px;top:40.80px;" width="9.6" height="9.6" viewBox="0 0 16 16" fill="none" stroke="#d6d5e3" stroke-width="1.45" stroke-linecap="round" stroke-linejoin="round"><circle cx="8" cy="8" r="6.8"/></svg>
<svg class="a" style="left:179.25px;top:39.85px;" width="11.5" height="11.5" viewBox="0 0 16 16" fill="none" stroke="#373258" stroke-width="1.5" stroke-linecap="round" stroke-linejoin="round"><path d="M3.2 3v4h4"/><path d="M3.6 6.8A5.3 5.3 0 1 1 3 10.6"/></svg>
<svg class="a" style="left:195.95px;top:39.85px;" width="11.5" height="11.5" viewBox="0 0 16 16" fill="none" stroke="#373258" stroke-width="1.5" stroke-linecap="round" stroke-linejoin="round"><path d="M12.8 3v4h-4"/><path d="M12.4 6.8A5.3 5.3 0 1 0 13 10.6"/></svg>
<svg class="a" style="left:216.25px;top:40.45px;" width="10.5" height="10.5" viewBox="0 0 16 16" fill="none" stroke="#d6d5e3" stroke-width="1.3" stroke-linecap="round" stroke-linejoin="round"><path d="M1.4 5.2a1.2 1.2 0 0 1 1.2-1.2h2l1.1-1.8h4.6L11.4 4h2a1.2 1.2 0 0 1 1.2 1.2v7a1.2 1.2 0 0 1-1.2 1.2H2.6a1.2 1.2 0 0 1-1.2-1.2z"/><circle cx="8" cy="8.6" r="2.7"/></svg>
<svg class="a" style="left:235.95px;top:40.05px;" width="10.5" height="10.5" viewBox="0 0 16 16" fill="none" stroke="#7459e0" stroke-width="0" stroke-linecap="round" stroke-linejoin="round"><path d="M10.5 1.2A7 7 0 1 0 14.6 11.6 6 6 0 0 1 10.5 1.2z" fill="#9b82f7" stroke="none"/></svg>
<svg class="a" style="left:423.00px;top:40.60px;" width="10" height="10" viewBox="0 0 16 16" fill="none" stroke="#b7b5ca" stroke-width="1.25" stroke-linecap="round" stroke-linejoin="round"><rect x="4.4" y="1.2" width="7.2" height="13.6" rx="1.3"/><path d="M7.2 12.6h1.6"/></svg>
<svg class="a" style="left:439.40px;top:40.60px;" width="10" height="10" viewBox="0 0 16 16" fill="none" stroke="#b7b5ca" stroke-width="1.3" stroke-linecap="round" stroke-linejoin="round"><rect x="1.6" y="3.4" width="12.8" height="9.2" rx="1.2"/></svg>
<svg class="a" style="left:455.60px;top:40.60px;" width="10" height="10" viewBox="0 0 16 16" fill="none" stroke="#b7b5ca" stroke-width="1.25" stroke-linecap="round" stroke-linejoin="round"><rect x="2.8" y="1.2" width="10.4" height="13.6" rx="1.3"/><path d="M7 12.6h2"/></svg>
<svg class="a" style="left:472.50px;top:40.30px;" width="11" height="11" viewBox="0 0 16 16" fill="none" stroke="#b7b5ca" stroke-width="1.15" stroke-linecap="round" stroke-linejoin="round"><rect x="3" y="3" width="10" height="7" rx=".8"/><path d="M1.2 10.2h13.6v1.2a1 1 0 0 1-1 1H2.2a1 1 0 0 1-1-1z"/></svg>
<svg class="a" style="left:490.55px;top:40.35px;" width="10.5" height="10.5" viewBox="0 0 16 16" fill="none" stroke="#b7b5ca" stroke-width="1.3" stroke-linecap="round" stroke-linejoin="round"><rect x="1.6" y="2" width="12.8" height="8.8" rx="1"/><path d="M8 10.8v3M5 14h6"/></svg>
<svg class="a" style="left:508.25px;top:39.85px;" width="11.5" height="11.5" viewBox="0 0 16 16" fill="none" stroke="#b7b5ca" stroke-width="1.15" stroke-linecap="round" stroke-linejoin="round"><rect x="1.2" y="2.4" width="13.6" height="8.6" rx="1"/><path d="M3.2 9h9.6M8 11v2.4M5.4 13.6h5.2"/></svg>
<svg class="a" style="left:526.60px;top:40.90px;" width="9.4" height="9.4" viewBox="0 0 16 16" fill="none" stroke="#7459e0" stroke-width="1.3" stroke-linecap="round" stroke-linejoin="round"><path d="M8 1.4v13.2M1.4 8h13.2M6 3.4l2-2 2 2M6 12.6l2 2 2-2M3.4 6l-2 2 2 2M12.6 6l2 2-2 2"/></svg>
<svg class="a" style="left:699.70px;top:41.00px;" width="9.4" height="9.4" viewBox="0 0 16 16" fill="#6f55dc" stroke="#6f55dc" stroke-width="1.2" stroke-linecap="round" stroke-linejoin="round"><path d="M6 1.2h5L9 6.4h3.4L6.2 15l1.4-6.2H4.2z"/></svg>
<svg class="a" style="left:715.50px;top:40.10px;" width="11" height="11" viewBox="0 0 16 16" fill="none" stroke="#d6d5e3" stroke-width="1.15" stroke-linecap="round" stroke-linejoin="round"><path d="M6 4.4H2.6a1 1 0 0 0-1 1v7.8a1 1 0 0 0 1 1h8.6a1 1 0 0 0 1-1V11"/><path d="M9.6 1.8l5 4-5 4V7.6C6.6 7.6 5.2 9 4.6 11c0-3.6 1.6-6.4 5-6.8z"/></svg>
<svg class="a" style="left:733.70px;top:41.30px;" width="8.6" height="8.6" viewBox="0 0 16 16" fill="none" stroke="#d6d5e3" stroke-width="0" stroke-linecap="round" stroke-linejoin="round"><g fill="#bdbbd0" stroke="none"><rect x="1.2" y="1.2" width="3.8" height="3.8"/><rect x="6.1" y="1.2" width="3.8" height="3.8"/><rect x="11" y="1.2" width="3.8" height="3.8"/><rect x="1.2" y="6.1" width="3.8" height="3.8"/><rect x="6.1" y="6.1" width="3.8" height="3.8"/><rect x="11" y="6.1" width="3.8" height="3.8"/><rect x="1.2" y="11" width="3.8" height="3.8"/><rect x="6.1" y="11" width="3.8" height="3.8"/><path d="M10.6 10.4l4.6 1.8-2 .8 1.4 2-1 .6-1.4-2-1.2 1.6z"/></g></svg>
<svg class="a" style="left:752.30px;top:40.10px;" width="11" height="11" viewBox="0 0 16 16" fill="none" stroke="#d6d5e3" stroke-width="1.4" stroke-linecap="round" stroke-linejoin="round"><path d="M2.2 7.2A5.9 5.9 0 0 1 12.6 4.2"/><path d="M13 1.4v3.2H9.8"/><path d="M13.8 8.8A5.9 5.9 0 0 1 3.4 11.8"/><path d="M3 14.6v-3.2h3.2"/></svg>
<svg class="a" style="left:894.70px;top:22.00px;" width="10.6" height="10.6" viewBox="0 0 16 16" fill="none" stroke="#6a54d4" stroke-width="1.3" stroke-linecap="round" stroke-linejoin="round"><path fill="#241c55" d="M12.4 8.6v5.6H1.6V3.600h6.200"/><path fill="#241c55" d="M12.4 1.2l2.400 2.400-6.800 6.800-3.200.8.800-3.200z"/></svg>
<svg class="a" style="left:911.15px;top:22.15px;" width="10.5" height="10.5" viewBox="0 0 16 16" fill="none" stroke="#d6d5e3" stroke-width="1.1" stroke-linecap="round" stroke-linejoin="round"><path d="M2 2l3.2 1 .6 2.2 7.6 7.6a1.3 1.3 0 0 1-1.9 1.9L4 7.2 1.8 6.4z"/><path d="M9.2 6.8l2-2a2.8 2.8 0 0 1 3.2-3.4L12.8 3l.3 1.4 1.4.3 1-1A2.8 2.8 0 0 1 11.8 6.6l-1.6 1.6M6.2 9.8l-4 4a1.3 1.3 0 0 0 1.9 1.9l3.7-4.1"/></svg>
<svg class="a" style="left:928.10px;top:22.80px;" width="9.4" height="9.4" viewBox="0 0 16 16" fill="none" stroke="#d6d5e3" stroke-width="0" stroke-linecap="round" stroke-linejoin="round"><path d="M.6 1.600h14.800l-1.500 10.600L8 14.600l-5.900-2.400z" fill="#e6e5f0" stroke="none"/><path d="M3.600 4.400h8.800M3.900 7.400h8.200l-.5 3.600L8 12.200l-3.600-1.200" stroke="#1c1930" stroke-width="1.500" fill="none" stroke-linecap="butt"/></svg>
<svg class="a" style="left:944.70px;top:23.00px;" width="9.2" height="9.2" viewBox="0 0 16 16" fill="none" stroke="#d6d5e3" stroke-width="1.5" stroke-linecap="round" stroke-linejoin="round"><path d="M6 1.2h5L9 6.4h3.4L6.2 15l1.4-6.2H4.2z"/></svg>
<svg class="a" style="left:179.70px;top:58.40px;" width="10.6" height="10.6" viewBox="0 0 16 16" fill="none" stroke="#6a54d4" stroke-width="1.3" stroke-linecap="round" stroke-linejoin="round"><path fill="#241c55" d="M12.4 8.6v5.6H1.6V3.600h6.200"/><path fill="#241c55" d="M12.4 1.2l2.400 2.400-6.800 6.800-3.200.8.800-3.200z"/></svg>
<svg class="a" style="left:179.50px;top:74.00px;" width="11" height="11" viewBox="0 0 16 16" fill="none" stroke="#d6d5e3" stroke-width="1.2" stroke-linecap="round" stroke-linejoin="round"><path d="M1 7.6h6M4 7.6v6.2M2.8 13.8h2.4M1 7.6v1.4M7 7.6v1.4"/><path d="M8 2.6h7M11.5 2.6v11.2M10 13.8h3M8 2.6v1.8M15 2.6v1.8"/></svg>
<svg class="a" style="left:179.75px;top:89.95px;" width="10.5" height="10.5" viewBox="0 0 16 16" fill="none" stroke="#d6d5e3" stroke-width="1.25" stroke-linecap="round" stroke-linejoin="round"><circle cx="8" cy="3.2" r="1.8"/><path d="M5.8 6.6h3.6v5.4h1.4v2.6H5.2V12h1.4V9H5.6z"/></svg>
<svg class="a" style="left:179.75px;top:105.65px;" width="10.5" height="10.5" viewBox="0 0 16 16" fill="none" stroke="#d6d5e3" stroke-width="1.15" stroke-linecap="round" stroke-linejoin="round"><path d="M5.600 1.600L2.200 4.600l1.900 2.500 1.100-.900v8.200h5.600V6.200l1.100.900 1.900-2.500-3.400-3c-.400 1.300-1.300 1.900-2.400 1.900s-2-.600-2.400-1.900z"/><path d="M8 5.400v6" stroke-width="1"/></svg>
<svg class="a" style="left:179.25px;top:120.15px;" width="11.5" height="11.5" viewBox="0 0 16 16" fill="none" stroke="#d6d5e3" stroke-width="1.15" stroke-linecap="round" stroke-linejoin="round"><path d="M1 8s2.600-4.400 7-4.400S15 8 15 8s-2.600 4.400-7 4.400S1 8 1 8z"/><circle cx="8" cy="8" r="2.300"/><circle cx="8" cy="8" r=".7" fill="#e4e3ee"/></svg>
<svg class="a" style="left:180.20px;top:451.20px;" width="9.6" height="9.6" viewBox="0 0 16 16" fill="none" stroke="#d6d5e3" stroke-width="0" stroke-linecap="round" stroke-linejoin="round"><g fill="#ecebf5" stroke="none"><rect x="0" y="0" width="16" height="16" rx="1"/></g><g stroke="#1c1930" stroke-width="1.4" stroke-linecap="butt"><path d="M5.500 0v16M10.500 0v16M0 5.500h16M0 10.500h16"/></g></svg>
<div class="a" style="left:179.90px;top:468.90px;width:10.10px;height:5.10px;border:0.9px solid #5f4cc0;border-bottom-width:1.5px;"></div>
<div class="a" style="left:182.2px;top:480.9px;width:3.4px;height:3.4px;border-radius:50%;background:#1fa82c;box-shadow:0 0 1.5px #1a8a24;"></div>
<svg class="a" style="left:6.00px;top:59.00px;" width="7.6" height="7.6" viewBox="0 0 16 16" fill="none" stroke="#e6e5f0" stroke-width="2.2" stroke-linecap="round" stroke-linejoin="round"><path d="M2.500 5l5.500 6 5.500-6"/></svg>
<svg class="a" style="left:15.95px;top:57.25px;" width="10.5" height="10.5" viewBox="0 0 16 16" fill="none" stroke="#7fd9c4" stroke-width="0" stroke-linecap="round" stroke-linejoin="round"><path d="M8 1.200l6 3v7.400l-6 3.200-6-3.200V4.200z" fill="#7fd9c4" stroke="none"/><path d="M2.600 4.700L8 7.500l5.400-2.800M8 7.500v6.600" stroke="#2a2253" stroke-width="1.250" fill="none"/></svg>
<svg class="a" style="left:20.60px;top:72.40px;" width="10" height="10" viewBox="0 0 16 16" fill="none" stroke="#7fd9c4" stroke-width="0" stroke-linecap="round" stroke-linejoin="round"><g fill="#7fd9c4" stroke="none"><ellipse cx="8" cy="3.200" rx="6" ry="2.400"/><path d="M2 5.200c0 1.300 2.700 2.300 6 2.300s6-1 6-2.300v2.600c0 1.300-2.700 2.400-6 2.400S2 9.100 2 7.800z"/><path d="M2 9.800c0 1.300 2.700 2.300 6 2.300s6-1 6-2.300v2.700c0 1.300-2.700 2.400-6 2.400s-6-1.100-6-2.400z"/></g></svg>
<svg class="a" style="left:20.60px;top:87.20px;" width="10" height="10" viewBox="0 0 16 16" fill="none" stroke="#7fd9c4" stroke-width="0" stroke-linecap="round" stroke-linejoin="round"><path d="M1 1.500h14L9.800 8v6.500L6.200 12V8z" fill="#7fd9c4" stroke="none"/></svg>
<svg class="a" style="left:20.35px;top:101.55px;" width="10.5" height="10.5" viewBox="0 0 16 16" fill="none" stroke="#7fd9c4" stroke-width="0" stroke-linecap="round" stroke-linejoin="round"><path d="M8 1.200l6 3v7.400l-6 3.200-6-3.200V4.200z" fill="#7fd9c4" stroke="none"/><path d="M2.600 4.700L8 7.500l5.400-2.800M8 7.500v6.600" stroke="#13101f" stroke-width="1.250" fill="none"/></svg>
<svg class="a" style="left:20.35px;top:116.25px;" width="10.5" height="10.5" viewBox="0 0 16 16" fill="none" stroke="#7fd9c4" stroke-width="0" stroke-linecap="round" stroke-linejoin="round"><path d="M8 1.200l6 3v7.400l-6 3.200-6-3.200V4.200z" fill="#7fd9c4" stroke="none"/><path d="M2.600 4.700L8 7.500l5.400-2.800M8 7.500v6.600" stroke="#13101f" stroke-width="1.250" fill="none"/></svg>
<svg class="a" style="left:10.40px;top:132.70px;" width="7" height="7" viewBox="0 0 16 16" fill="none" stroke="#7d7a96" stroke-width="1.7" stroke-linecap="round" stroke-linejoin="round"><path d="M5 2.500l6 5.500-6 5.500"/></svg>
<div class="a" style="left:21.00px;top:131.60px;width:9.20px;height:9.20px;background:#8cc8d8;"></div>
<svg class="a" style="left:165.85px;top:58.75px;" width="7.5" height="7.5" viewBox="0 0 16 16" fill="none" stroke="#ffffff" stroke-width="2.4" stroke-linecap="round" stroke-linejoin="round"><path d="M8 2v12M2 8h12"/></svg>
<svg class="a" style="left:827.25px;top:102.65px;" width="6.9" height="6.9" viewBox="0 0 16 16" fill="none" stroke="#b3b1c6" stroke-width="1.6" stroke-linecap="round" stroke-linejoin="round"><rect x="1.200" y="1.200" width="13.600" height="13.600" rx="1.500"/><path d="M8 4.200v7.600M6.200 4.200h3.600M6.200 11.800h3.600"/></svg>
<svg class="a" style="left:827.25px;top:213.55px;" width="6.9" height="6.9" viewBox="0 0 16 16" fill="none" stroke="#b3b1c6" stroke-width="1.6" stroke-linecap="round" stroke-linejoin="round"><rect x="1.200" y="1.200" width="13.600" height="13.600" rx="1.500"/><path d="M8 4.200v7.600M6.200 4.200h3.600M6.200 11.800h3.600"/></svg>
<svg class="a" style="left:943.30px;top:126.40px;" width="4.6" height="4.6" viewBox="0 0 16 16" fill="none" stroke="#d4d3df" stroke-width="3.2" stroke-linecap="round" stroke-linejoin="round"><path d="M2.500 5l5.500 6 5.500-6"/></svg>
<svg class="a" style="left:943.30px;top:216.00px;" width="4.6" height="4.6" viewBox="0 0 16 16" fill="none" stroke="#d4d3df" stroke-width="3.2" stroke-linecap="round" stroke-linejoin="round"><path d="M2.500 5l5.500 6 5.500-6"/></svg>
<svg class="a" style="left:929.05px;top:259.95px;" width="8.5" height="8.5" viewBox="0 0 16 16" fill="none" stroke="#b4c24a" stroke-width="0" stroke-linecap="round" stroke-linejoin="round"><path d="M11.500 1.200l3.300 3.300L5.500 13.800l-4.300 1 1-4.300z" fill="#b4c24a" stroke="none"/><path d="M10 3l3 3" stroke="#000" stroke-width="1"/></svg>
<svg class="a" style="left:942.80px;top:261.70px;" width="5.2" height="5.2" viewBox="0 0 16 16" fill="none" stroke="#d6d5e3" stroke-width="2.3" stroke-linecap="round" stroke-linejoin="round"><path d="M2.500 2.500l11 11M13.500 2.500l-11 11"/></svg>
<svg class="a" style="left:941.70px;top:307.60px;" width="8.2" height="8.2" viewBox="0 0 16 16" fill="none" stroke="#dcdbe8" stroke-width="1.7" stroke-linecap="round" stroke-linejoin="round"><path d="M8 1.500v13M1.500 8h13"/></svg>
<svg class="a" style="left:941.70px;top:333.60px;" width="8.2" height="8.2" viewBox="0 0 16 16" fill="none" stroke="#dcdbe8" stroke-width="1.7" stroke-linecap="round" stroke-linejoin="round"><path d="M8 1.500v13M1.500 8h13"/></svg>
<svg class="a" style="left:941.70px;top:359.60px;" width="8.2" height="8.2" viewBox="0 0 16 16" fill="none" stroke="#dcdbe8" stroke-width="1.7" stroke-linecap="round" stroke-linejoin="round"><path d="M8 1.500v13M1.500 8h13"/></svg>
<svg class="a" style="left:941.70px;top:385.60px;" width="8.2" height="8.2" viewBox="0 0 16 16" fill="none" stroke="#dcdbe8" stroke-width="1.7" stroke-linecap="round" stroke-linejoin="round"><path d="M8 1.500v13M1.500 8h13"/></svg>
<div class="a" style="left:780.60px;top:267.50px;width:0.60px;height:7.00px;background:#3d3960;"></div>
<div class="a" style="left:781.90px;top:267.50px;width:0.60px;height:7.00px;background:#3d3960;"></div>
<div class="a" style="left:2.30px;top:506.00px;width:6.6px;height:6.6px;border-radius:50%;background:#8fd941;"></div>
<div class="a" style="left:161.70px;top:506.00px;width:6.6px;height:6.6px;border-radius:50%;background:#8fd941;"></div>
<div class="a" style="left:82.9px;top:508.6px;width:0;height:0;border-left:2.1px solid transparent;border-right:2.1px solid transparent;border-top:2.500px solid #d6d5e3;"></div>
<svg class="a" style="left:220.75px;top:505.55px;" width="7.5" height="7.5" viewBox="0 0 16 16" fill="none" stroke="#d6d5e3" stroke-width="1.8" stroke-linecap="round" stroke-linejoin="round"><path d="M8 1.500v13M1.500 8h13"/></svg>
<svg class="a" style="left:736.30px;top:505.10px;" width="8.4" height="8.4" viewBox="0 0 16 16" fill="none" stroke="#6e55d0" stroke-width="2.0" stroke-linecap="round" stroke-linejoin="round"><rect x="1.500" y="1.500" width="13" height="13" rx="1"/></svg>
<svg class="a" style="left:752.25px;top:504.45px;" width="9.5" height="9.5" viewBox="0 0 16 16" fill="none" stroke="#d6d5e3" stroke-width="1.45" stroke-linecap="round" stroke-linejoin="round"><path d="M13.400 8A5.500 5.500 0 1 1 11.400 3.700"/><path d="M12.600 1v3.600H9"/></svg>
<svg class="a" style="left:784.00px;top:504.20px;" width="10" height="10" viewBox="0 0 16 16" fill="none" stroke="#d6d5e3" stroke-width="1.15" stroke-linecap="round" stroke-linejoin="round"><path d="M6.200 2.200l1.300 3.500 3.500 1.300-3.500 1.300-1.300 3.500-1.300-3.500L1.400 7l3.500-1.300z"/><path d="M12 1v3M10.500 2.500h3M12.200 10.500v3.500M10.400 12.200H14"/></svg>
<svg class="a" style="left:800.80px;top:504.00px;" width="10" height="10" viewBox="0 0 16 16" fill="none" stroke="#d6d5e3" stroke-width="1.2" stroke-linecap="round" stroke-linejoin="round"><path d="M1.500 7.200h2.800v7H1.500zM4.300 13.200V7.600L7.300 1.600c1.200 0 1.900.9 1.700 2.100L8.600 6h4.500c.9 0 1.500.8 1.300 1.700l-1.100 5.200a1.600 1.600 0 0 1-1.600 1.300H6.200z"/></svg>
<svg class="a" style="left:817.25px;top:503.95px;" width="10.5" height="10.5" viewBox="0 0 16 16" fill="none" stroke="#d6d5e3" stroke-width="1.25" stroke-linecap="round" stroke-linejoin="round"><path d="M14.600 1.400L8.800 7.200M10.400 8.600L7.400 5.600 3 10c-.8.800-.6 2.600-2 3.800 2.200.4 4.200.2 5-.6z"/></svg>
<svg class="a" style="left:842.50px;top:504.80px;" width="9" height="9" viewBox="0 0 16 16" fill="none" stroke="#d6d5e3" stroke-width="1.7" stroke-linecap="round" stroke-linejoin="round"><path d="M1.500 8.500l4.200 4.500 8.800-10"/></svg>
<svg class="a" style="left:907.25px;top:504.05px;" width="10.5" height="10.5" viewBox="0 0 16 16" fill="none" stroke="#d6d5e3" stroke-width="1.25" stroke-linecap="round" stroke-linejoin="round"><path d="M9.400 1.800l5 5-7 7H4.600L1.600 10.800a1 1 0 0 1 0-1.400zM5 6.200l5 5M7.400 13.800h7"/></svg>
<svg class="a" style="left:924.25px;top:503.95px;" width="10.5" height="10.5" viewBox="0 0 16 16" fill="none" stroke="#d6d5e3" stroke-width="1.1" stroke-linecap="round" stroke-linejoin="round"><path d="M5.400 4.600a2.600 2.600 0 0 1 5.200 0M4.600 4.600h6.800v6a3.400 3.400 0 0 1-6.800 0zM8 4.600v9.400M4.600 7.400H1.400M14.600 7.400h-3.200M4.600 10.600l-2.600 2M11.400 10.600l2.600 2M4.800 4.400L2.600 2.400M11.200 4.400l2.200-2"/></svg>
<svg class="a" style="left:945.25px;top:505.35px;" width="8.5" height="8.5" viewBox="0 0 16 16" fill="none" stroke="#d6d5e3" stroke-width="1.5" stroke-linecap="round" stroke-linejoin="round"><path d="M1.500 11.500L8 4.500l6.500 7"/></svg>
<div class="a" style="left:211.00px;top:182.90px;width:541.40px;height:53.90px;border:0.9px solid #33373c;border-radius:3.5px;"></div>
<div class="a" style="left:221.50px;top:208.30px;width:124.30px;height:18.30px;border:0.9px solid #42474d;border-radius:2.600px;"></div>
<svg class="a" style="left:333.00px;top:214.60px;" width="5.6" height="5.6" viewBox="0 0 16 16" fill="none" stroke="#e2e5e9" stroke-width="2.3" stroke-linecap="round" stroke-linejoin="round"><path d="M2.500 5l5.500 6 5.500-6"/></svg>
<div class="a" style="left:353.50px;top:208.30px;width:124.60px;height:18.30px;border:0.9px solid #42474d;border-radius:2.600px;"></div>
<svg class="a" style="left:465.30px;top:214.60px;" width="5.6" height="5.6" viewBox="0 0 16 16" fill="none" stroke="#e2e5e9" stroke-width="2.3" stroke-linecap="round" stroke-linejoin="round"><path d="M2.500 5l5.500 6 5.500-6"/></svg>
<div class="a" style="left:485.80px;top:208.30px;width:80.50px;height:18.30px;border:0.9px solid #42474d;border-radius:2.600px;"></div>
<svg class="a" style="left:553.50px;top:214.60px;" width="5.6" height="5.6" viewBox="0 0 16 16" fill="none" stroke="#e2e5e9" stroke-width="2.3" stroke-linecap="round" stroke-linejoin="round"><path d="M2.500 5l5.500 6 5.500-6"/></svg>
<div class="a" style="left:573.80px;top:208.30px;width:80.70px;height:18.30px;border:0.9px solid #42474d;border-radius:2.600px;"></div>
<svg class="a" style="left:641.70px;top:214.60px;" width="5.6" height="5.6" viewBox="0 0 16 16" fill="none" stroke="#e2e5e9" stroke-width="2.3" stroke-linecap="round" stroke-linejoin="round"><path d="M2.500 5l5.500 6 5.500-6"/></svg>
<div class="a" style="left:662.00px;top:208.30px;width:80.80px;height:18.30px;border:0.9px solid #42474d;border-radius:2.600px;"></div>
<svg class="a" style="left:730.00px;top:214.60px;" width="5.6" height="5.6" viewBox="0 0 16 16" fill="none" stroke="#e2e5e9" stroke-width="2.3" stroke-linecap="round" stroke-linejoin="round"><path d="M2.500 5l5.500 6 5.500-6"/></svg>
<div class="a" style="left:675.10px;top:248.40px;width:77.50px;height:15.40px;border:1px solid #1a66e8;border-radius:2.600px;"></div>
<div class="a" style="left:211.3px;top:275.2px;width:310.7px;height:220px;border:0.9px solid #33373c;border-radius:3.500px;clip-path:inset(0 0 7.8px 0);"></div>
<div class="a" style="left:533.2px;top:275.2px;width:219.3px;height:220px;border:0.9px solid #33373c;border-radius:3.500px;clip-path:inset(0 0 7.8px 0);"></div>
<div class="a" style="left:717.20px;top:285.50px;width:25.30px;height:9.70px;background:#0d6efd;border-radius:2px;"></div>
<div class="a" style="left:543.80px;top:327.10px;width:95.40px;height:122.30px;background:#2c3036;border:0.9px solid #3b4046;border-radius:3px;"></div>
<div class="a" style="left:647.20px;top:327.10px;width:95.30px;height:122.30px;background:#2c3036;border:0.9px solid #3b4046;border-radius:3px;"></div>
<div class="a" style="left:543.8px;top:457.2px;width:95.4px;height:40px;background:#2c3036;border:0.9px solid #3b4046;border-radius:3px;clip-path:inset(0 0 9.8px 0);"></div>
<div class="a" style="left:647.2px;top:457.2px;width:95.3px;height:40px;background:#2c3036;border:0.9px solid #3b4046;border-radius:3px;clip-path:inset(0 0 9.8px 0);"></div>
<svg class="a" style="left:0;top:0" width="960" height="519" viewBox="0 0 960 519"><path d="M591.90 350.30A19.0 19.0 0 0 1 608.01 379.37L599.19 373.86A8.6 8.6 0 0 0 591.90 360.70Z" fill="#4a849c" stroke="#72aabf" stroke-width="0.7"/><path d="M608.01 379.37A19.0 19.0 0 0 1 574.97 377.93L584.24 373.20A8.6 8.6 0 0 0 599.19 373.86Z" fill="#7a9741" stroke="#9cb95c" stroke-width="0.7"/><path d="M574.97 377.93A19.0 19.0 0 0 1 591.90 350.30L591.90 360.70A8.6 8.6 0 0 0 584.24 373.20Z" fill="#ad8b4b" stroke="#cfae6a" stroke-width="0.7"/><rect x="570.9" y="392.20" width="19.6" height="6.2" fill="#4a849c" stroke="#72aabf" stroke-width="0.7"/><rect x="570.9" y="403.05" width="19.6" height="6.2" fill="#7a9741" stroke="#9cb95c" stroke-width="0.7"/><rect x="570.9" y="413.90" width="19.6" height="6.2" fill="#ad8b4b" stroke="#cfae6a" stroke-width="0.7"/></svg>
<svg class="a" style="left:0;top:0" width="960" height="519" viewBox="0 0 960 519"><rect x="692.2" y="357.2" width="10.60" height="24.00" fill="#2f6088" stroke="#3c72a0" stroke-width="0.6"/><rect x="706.0" y="366.7" width="10.70" height="14.50" fill="#2f6088" stroke="#3c72a0" stroke-width="0.6"/><rect x="720.0" y="366.0" width="10.60" height="15.20" fill="#2f6088" stroke="#3c72a0" stroke-width="0.6"/><text x="698.6" y="389.6" font-size="6.1" fill="#50575e" text-anchor="end" font-family="Liberation Sans, sans-serif" transform="rotate(-45 698.6 389.6)">value 1</text><text x="726.6" y="389.6" font-size="6.1" fill="#50575e" text-anchor="end" font-family="Liberation Sans, sans-serif" transform="rotate(-45 726.6 389.6)">value 3</text></svg>
<div class="a" style="left:683.30px;top:483.60px;width:36.70px;height:3.80px;background:#37457a;"></div>
<svg class="a" style="left:0;top:0" width="960" height="519" viewBox="0 0 960 519"><defs><filter id="mblur" x="-50%" y="-50%" width="200%" height="200%"><feGaussianBlur stdDeviation="1.1"/></filter><clipPath id="mapclip"><rect x="211.9" y="329.8" width="309.9" height="157.6"/></clipPath></defs><g clip-path="url(#mapclip)"><rect x="211.9" y="329.8" width="309.9" height="157.6" fill="#cecbc5"/><path d="M496.4 333.2L492.8 331.8L488.6 334.2L484.3 336.3L479.4 338.4L474.4 342.0L468.0 344.2L462.6 347.8L459.6 352.6L460.6 355.1L462.3 358.9L465.0 360.5L464.6 364.6L459.0 363.8L452.5 365.9L447.0 368.4L442.4 370.2L439.3 377.8L436.1 384.3L433.9 389.7L432.3 394.0L430.7 398.3L432.8 403.8L430.7 408.1L427.4 411.3L423.1 414.6L418.8 417.8L414.4 420.0L408.6 423.1L404.0 430.0L401.6 436.2L400.9 442.4L403.2 450.0L407.8 460.8L410.4 468.0L408.8 473.6L404.6 474.6L399.4 469.0L393.9 459.3L390.1 453.1L387.8 447.0L384.7 443.1L380.1 441.6L375.4 443.1L370.8 442.4L364.7 440.8L358.5 442.4L355.4 446.2L350.8 444.7L344.6 446.2L339.0 445.5L331.3 445.5L323.6 448.5L315.9 454.7L312.8 462.4L312.1 468.6L312.8 477.8L310.5 488.0L523.0 488.0L523.0 329.9L521.9 330.5L518.3 332.2L512.7 335.1L505.6 338.6L499.9 341.5L495.7 341.7L492.8 345.7L487.2 350.7L482.9 350.9L481.6 345.7L484.3 341.8L487.9 338.4L491.4 335.8L494.2 334.0Z" fill="#90b5c3" stroke="#a6c3cc" stroke-width="0.8" stroke-linejoin="round" /><path d="M211.0 443.8L217.3 454.7L225.0 464.0L231.1 474.8L238.8 482.5L241.1 488.0L211.0 488.0Z" fill="#90b5c3" stroke="#a6c3cc" stroke-width="0.8" stroke-linejoin="round" /><path d="M215.2 431.8L219.5 431.4L223.4 433.1L226.5 440.8L231.1 451.6L238.8 460.9L246.5 470.1L254.3 477.8L263.5 488.0L245.0 488.0L241.9 479.4L235.8 471.7L228.0 460.9L220.3 448.5L215.7 437.8Z" fill="#90b5c3" stroke="#a6c3cc" stroke-width="0.8" stroke-linejoin="round" /><path d="M365.0 329.0L373.8 329.0L374.4 333.0L377.0 335.0L381.0 331.0L384.0 329.0L372.0 329.0L371.6 337.0L371.8 344.0L373.0 352.0L371.6 360.0L369.0 363.2L366.2 361.0L364.8 352.0L364.6 342.0L365.6 334.0Z" fill="#90b5c3" stroke="#a6c3cc" stroke-width="0.6" stroke-linejoin="round" /><path d="M380.0 329.0L407.0 329.0L408.2 333.6L405.4 338.6L401.8 337.2L399.6 333.6L398.0 336.0L400.4 343.0L399.0 349.0L394.4 353.2L392.6 351.0L393.4 345.0L391.0 341.4L387.4 346.6L386.0 345.0L388.4 338.8L386.0 334.0L381.6 333.2Z" fill="#90b5c3" stroke="#a6c3cc" stroke-width="0.6" stroke-linejoin="round" /><path d="M389.0 362.0L391.6 358.6L397.6 356.6L404.0 355.0L410.0 353.2L413.4 353.8L412.0 356.6L406.0 358.6L400.0 361.0L395.0 363.4L391.0 364.0Z" fill="#90b5c3" stroke="#a6c3cc" stroke-width="0.6" stroke-linejoin="round" /><path d="M409.6 350.4L412.6 347.6L418.0 346.6L423.6 345.4L427.6 344.0L428.6 346.0L425.0 348.4L419.0 349.8L413.6 351.4Z" fill="#90b5c3" stroke="#a6c3cc" stroke-width="0.6" stroke-linejoin="round" /><path d="M505.6 330.6L512.0 331.0L519.7 330.4" fill="none" stroke="#90b5c3" stroke-width="1.2" stroke-linejoin="round" stroke-linecap="round" /><path d="M493.0 335.2L498.5 335.0" fill="none" stroke="#90b5c3" stroke-width="1.0" stroke-linejoin="round" stroke-linecap="round" /><ellipse cx="518.0" cy="345.6" rx="2.6" ry="1.2" fill="none" stroke="#a9c6cf" stroke-width="0.5"/><path d="M428.6 381.6L428.0 386.0L429.2 391.0L430.0 395.0" fill="none" stroke="#90b5c3" stroke-width="1.3" stroke-linejoin="round" stroke-linecap="round" /><path d="M435.4 379.0L434.0 383.6" fill="none" stroke="#90b5c3" stroke-width="1.4" stroke-linejoin="round" stroke-linecap="round" /><path d="M429.6 400.6L426.0 401.4" fill="none" stroke="#90b5c3" stroke-width="1.2" stroke-linejoin="round" stroke-linecap="round" /><path d="M428.6 406.8L425.4 407.6" fill="none" stroke="#90b5c3" stroke-width="1.2" stroke-linejoin="round" stroke-linecap="round" /><path d="M212.3 425.4L228.0 430.0L249.6 433.1L260.4 430.8L269.7 439.3L275.8 447.0L283.5 443.9L291.3 448.5L299.0 460.9L306.7 466.3L312.1 467.8" fill="none" stroke="#ab9eac" stroke-width="0.7" stroke-linejoin="round" stroke-linecap="round" /><path d="M394.4 353.2L392.0 358.0L389.6 361.6" fill="none" stroke="#ab9eac" stroke-width="0.6" stroke-linejoin="round" stroke-linecap="round" /><path d="M413.0 353.6L412.4 351.0" fill="none" stroke="#ab9eac" stroke-width="0.6" stroke-linejoin="round" stroke-linecap="round" /><path d="M428.0 344.6L431.6 340.6L436.0 337.2L444.6 337.0L452.0 336.8L455.6 331.6L457.0 329.0" fill="none" stroke="#ab9eac" stroke-width="0.6" stroke-linejoin="round" stroke-linecap="round" /><path d="M468.6 329.0L470.6 334.0L472.6 338.0L472.0 343.0" fill="none" stroke="#ab9eac" stroke-width="0.6" stroke-linejoin="round" stroke-linecap="round" /><rect x="211.9" y="367.9" width="311" height="0.7" fill="#8f8c88" opacity=".5"/><rect x="443" y="367.9" width="80" height="0.7" fill="#6f93a2" opacity=".5"/><path d="M231.5 330.0L231.5 339.5" fill="none" stroke="#b6b1ad" stroke-width="0.5" stroke-linejoin="round" stroke-linecap="round" /><path d="M212.0 339.5L258.0 339.5" fill="none" stroke="#b6b1ad" stroke-width="0.5" stroke-linejoin="round" stroke-linecap="round" /><path d="M258.0 330.0L258.0 345.6" fill="none" stroke="#b6b1ad" stroke-width="0.5" stroke-linejoin="round" stroke-linecap="round" /><path d="M240.6 345.6L296.0 345.6" fill="none" stroke="#b6b1ad" stroke-width="0.5" stroke-linejoin="round" stroke-linecap="round" /><path d="M240.6 345.6L240.6 379.6" fill="none" stroke="#b6b1ad" stroke-width="0.5" stroke-linejoin="round" stroke-linecap="round" /><path d="M212.0 379.6L240.6 379.6" fill="none" stroke="#b6b1ad" stroke-width="0.5" stroke-linejoin="round" stroke-linecap="round" /><path d="M226.0 379.6L226.0 428.6" fill="none" stroke="#b6b1ad" stroke-width="0.5" stroke-linejoin="round" stroke-linecap="round" /><path d="M240.6 379.6L283.0 379.6" fill="none" stroke="#b6b1ad" stroke-width="0.5" stroke-linejoin="round" stroke-linecap="round" /><path d="M254.8 379.6L254.8 431.6" fill="none" stroke="#b6b1ad" stroke-width="0.5" stroke-linejoin="round" stroke-linecap="round" /><path d="M283.0 367.6L283.0 392.0" fill="none" stroke="#b6b1ad" stroke-width="0.5" stroke-linejoin="round" stroke-linecap="round" /><path d="M258.0 367.6L326.0 367.6" fill="none" stroke="#b6b1ad" stroke-width="0.5" stroke-linejoin="round" stroke-linecap="round" /><path d="M283.0 392.0L330.0 392.0" fill="none" stroke="#b6b1ad" stroke-width="0.5" stroke-linejoin="round" stroke-linecap="round" /><path d="M296.0 345.6L296.0 367.6" fill="none" stroke="#b6b1ad" stroke-width="0.5" stroke-linejoin="round" stroke-linecap="round" /><path d="M283.0 394.6L296.6 394.6L296.6 412.0L305.0 414.0L316.0 416.6L329.0 415.0" fill="none" stroke="#b6b1ad" stroke-width="0.5" stroke-linejoin="round" stroke-linecap="round" /><path d="M254.8 394.6L283.0 394.6" fill="none" stroke="#b6b1ad" stroke-width="0.5" stroke-linejoin="round" stroke-linecap="round" /><path d="M329.0 392.0L329.0 415.0L331.0 428.0L332.6 440.0" fill="none" stroke="#b6b1ad" stroke-width="0.5" stroke-linejoin="round" stroke-linecap="round" /><path d="M326.0 367.6L330.0 379.0L330.0 392.0" fill="none" stroke="#b6b1ad" stroke-width="0.5" stroke-linejoin="round" stroke-linecap="round" /><path d="M296.0 345.6L322.0 346.6L326.0 352.0L326.0 367.6" fill="none" stroke="#b6b1ad" stroke-width="0.5" stroke-linejoin="round" stroke-linecap="round" /><path d="M318.0 330.0L318.0 346.0" fill="none" stroke="#b6b1ad" stroke-width="0.5" stroke-linejoin="round" stroke-linecap="round" /><path d="M322.0 346.6L352.0 347.6" fill="none" stroke="#b6b1ad" stroke-width="0.5" stroke-linejoin="round" stroke-linecap="round" /><path d="M326.0 360.0L348.0 360.6L352.6 366.0L355.0 377.0" fill="none" stroke="#b6b1ad" stroke-width="0.5" stroke-linejoin="round" stroke-linecap="round" /><path d="M330.0 392.0L357.0 392.0" fill="none" stroke="#b6b1ad" stroke-width="0.5" stroke-linejoin="round" stroke-linecap="round" /><path d="M330.0 379.0L352.0 379.6" fill="none" stroke="#b6b1ad" stroke-width="0.5" stroke-linejoin="round" stroke-linecap="round" /><path d="M348.0 330.0L350.6 340.0L352.0 347.6L348.0 360.6" fill="none" stroke="#b6b1ad" stroke-width="0.5" stroke-linejoin="round" stroke-linecap="round" /><path d="M355.0 377.0L357.0 392.0L352.0 408.0L351.6 425.0L355.0 441.0" fill="none" stroke="#b6b1ad" stroke-width="0.5" stroke-linejoin="round" stroke-linecap="round" /><path d="M332.0 417.0L351.6 417.6" fill="none" stroke="#b6b1ad" stroke-width="0.5" stroke-linejoin="round" stroke-linecap="round" /><path d="M360.6 364.0L361.0 377.0L357.6 386.0" fill="none" stroke="#b6b1ad" stroke-width="0.5" stroke-linejoin="round" stroke-linecap="round" /><path d="M369.6 363.6L370.6 381.0L366.0 389.0" fill="none" stroke="#b6b1ad" stroke-width="0.5" stroke-linejoin="round" stroke-linecap="round" /><path d="M357.6 386.0L366.0 389.0L378.0 384.0L386.0 386.6" fill="none" stroke="#b6b1ad" stroke-width="0.5" stroke-linejoin="round" stroke-linecap="round" /><path d="M357.0 396.0L380.0 395.0L404.0 393.0" fill="none" stroke="#b6b1ad" stroke-width="0.5" stroke-linejoin="round" stroke-linecap="round" /><path d="M356.0 404.6L392.0 403.6" fill="none" stroke="#b6b1ad" stroke-width="0.5" stroke-linejoin="round" stroke-linecap="round" /><path d="M366.0 404.6L367.0 430.0L365.6 440.0" fill="none" stroke="#b6b1ad" stroke-width="0.5" stroke-linejoin="round" stroke-linecap="round" /><path d="M378.6 404.0L383.6 424.0L383.6 436.0L399.6 436.6" fill="none" stroke="#b6b1ad" stroke-width="0.5" stroke-linejoin="round" stroke-linecap="round" /><path d="M366.0 434.6L383.6 436.0" fill="none" stroke="#b6b1ad" stroke-width="0.5" stroke-linejoin="round" stroke-linecap="round" /><path d="M392.0 403.6L400.0 411.0L408.0 421.0" fill="none" stroke="#b6b1ad" stroke-width="0.5" stroke-linejoin="round" stroke-linecap="round" /><path d="M392.0 403.6L404.0 401.0L416.0 405.0L419.0 417.0" fill="none" stroke="#b6b1ad" stroke-width="0.5" stroke-linejoin="round" stroke-linecap="round" /><path d="M404.0 393.0L428.0 393.0" fill="none" stroke="#b6b1ad" stroke-width="0.5" stroke-linejoin="round" stroke-linecap="round" /><path d="M386.0 364.0L386.6 381.0" fill="none" stroke="#b6b1ad" stroke-width="0.5" stroke-linejoin="round" stroke-linecap="round" /><path d="M386.6 381.0L392.0 378.0L398.0 384.0L404.0 393.0" fill="none" stroke="#b6b1ad" stroke-width="0.5" stroke-linejoin="round" stroke-linecap="round" /><path d="M398.0 384.0L408.0 376.0L416.6 379.6L424.0 383.6" fill="none" stroke="#b6b1ad" stroke-width="0.5" stroke-linejoin="round" stroke-linecap="round" /><path d="M391.6 364.0L391.6 370.0L428.0 370.0L436.0 372.0" fill="none" stroke="#b6b1ad" stroke-width="0.5" stroke-linejoin="round" stroke-linecap="round" /><path d="M408.0 370.0L408.0 376.0" fill="none" stroke="#b6b1ad" stroke-width="0.5" stroke-linejoin="round" stroke-linecap="round" /><path d="M413.0 357.0L413.0 370.0" fill="none" stroke="#b6b1ad" stroke-width="0.5" stroke-linejoin="round" stroke-linecap="round" /><path d="M428.0 370.0L431.0 378.0" fill="none" stroke="#b6b1ad" stroke-width="0.5" stroke-linejoin="round" stroke-linecap="round" /><path d="M444.6 337.0L444.0 350.0L445.6 366.0" fill="none" stroke="#b6b1ad" stroke-width="0.5" stroke-linejoin="round" stroke-linecap="round" /><path d="M452.0 336.8L452.0 350.0L452.6 358.6" fill="none" stroke="#b6b1ad" stroke-width="0.5" stroke-linejoin="round" stroke-linecap="round" /><path d="M444.0 358.0L461.0 357.6" fill="none" stroke="#b6b1ad" stroke-width="0.5" stroke-linejoin="round" stroke-linecap="round" /><path d="M455.6 338.0L458.0 346.0L461.0 351.6" fill="none" stroke="#b6b1ad" stroke-width="0.5" stroke-linejoin="round" stroke-linecap="round" /><path d="M445.0 362.6L456.0 362.0" fill="none" stroke="#b6b1ad" stroke-width="0.5" stroke-linejoin="round" stroke-linecap="round" /><text x="284.4" y="399.8" font-size="5.6" fill="#6c6078" letter-spacing="0.28" text-anchor="start" font-family="Liberation Sans, DejaVu Sans, sans-serif" >United States</text><text x="221.0" y="418.4" font-size="5.4" fill="#3c3c3c" letter-spacing="0.05" text-anchor="start" font-family="Liberation Sans, DejaVu Sans, sans-serif" >Phoenix</text><text x="275.4" y="484.4" font-size="5.6" fill="#6c6078" letter-spacing="0.25" text-anchor="start" font-family="Liberation Sans, DejaVu Sans, sans-serif" >México</text><text x="401.6" y="346.2" font-size="5.4" fill="#3c3c3c" letter-spacing="0.0" text-anchor="start" font-family="Liberation Sans, DejaVu Sans, sans-serif" >Toronto</text><text x="423.0" y="332.0" font-size="5.4" fill="#3c3c3c" letter-spacing="0.0" text-anchor="start" font-family="Liberation Sans, DejaVu Sans, sans-serif" >Ottawa</text><text x="429.2" y="375.6" font-size="5.4" fill="#3c3c3c" letter-spacing="0.1" text-anchor="start" font-family="Liberation Sans, DejaVu Sans, sans-serif" >New York</text><text x="409.0" y="390.0" font-size="5.4" fill="#3c3c3c" letter-spacing="0.1" text-anchor="start" font-family="Liberation Sans, DejaVu Sans, sans-serif" >Washington</text><text x="404.0" y="481.2" font-size="5.4" fill="#8a6a84" letter-spacing="0.35" text-anchor="start" font-family="Liberation Sans, DejaVu Sans, sans-serif" >The Bahamas</text><text x="365.2" y="487.0" font-size="5.2" fill="#3c3c3c" letter-spacing="0.2" text-anchor="start" font-family="Liberation Sans, DejaVu Sans, sans-serif" >La Habana</text><circle cx="423.4" cy="383.0" r="0.9" fill="#77736f"/><circle cx="431.0" cy="334.5" r="0.9" fill="#77736f"/><ellipse cx="492.6" cy="424.6" rx="2" ry="1.5" fill="none" stroke="#a9c6cf" stroke-width="0.5"/><path d="M410.6 461.0L413.6 465.0L417.0 471.0L421.0 477.0" fill="none" stroke="#a9c6cf" stroke-width="0.5" stroke-linejoin="round" stroke-linecap="round" /><path d="M408.0 472.0L404.0 475.6L397.0 476.6L392.0 475.6" fill="none" stroke="#a9c6cf" stroke-width="0.5" stroke-linejoin="round" stroke-linecap="round" /><rect x="217.7" y="335.6" width="14.2" height="29.2" rx="1.4" fill="#ffffff" stroke="#aeaba6" stroke-width="0.9"/><rect x="217.7" y="349.9" width="14.2" height="0.6" fill="#cfcfcf"/><path d="M222.5 342.9h4.8M224.9 340.5v4.8M222.7 357.5h4.4" stroke="#222" stroke-width="1.25" fill="none"/><path d="M268.60 375.00C267.00 369.18 262.90 366.72 262.90 361.30A5.7 5.7 0 0 1 274.30 361.30C274.30 366.72 270.20 369.18 268.60 375.00Z" fill="#2e84cc" stroke="#2573b4" stroke-width="0.6"/><circle cx="268.60" cy="361.60" r="2.1" fill="#ffffff"/><ellipse cx="274.5" cy="372.4" rx="5.4" ry="2.4" fill="#000" opacity=".42" filter="url(#mblur)" transform="rotate(-35 274.5 372.4)"/><path d="M269.90 375.80C268.30 369.62 263.80 367.10 263.80 361.30A6.1 6.1 0 0 1 276.00 361.30C276.00 367.10 271.50 369.62 269.90 375.80Z" fill="#2e84cc" stroke="#2573b4" stroke-width="0.6"/><circle cx="269.90" cy="361.60" r="2.1" fill="#ffffff"/><ellipse cx="314.5" cy="436.2" rx="5.4" ry="2.4" fill="#000" opacity=".42" filter="url(#mblur)" transform="rotate(-35 314.5 436.2)"/><path d="M309.90 439.60C308.30 434.08 303.90 432.90 303.90 427.20A6.0 6.0 0 0 1 315.90 427.20C315.90 432.90 311.50 434.08 309.90 439.60Z" fill="#2e84cc" stroke="#2573b4" stroke-width="0.6"/><circle cx="309.90" cy="427.50" r="2.1" fill="#ffffff"/><path d="M320.80 442.80C319.20 437.46 315.10 436.12 315.10 430.70A5.7 5.7 0 0 1 326.50 430.70C326.50 436.12 322.40 437.46 320.80 442.80Z" fill="#2e84cc" stroke="#2573b4" stroke-width="0.6"/><circle cx="320.80" cy="431.00" r="2.1" fill="#ffffff"/><ellipse cx="326.8" cy="440.2" rx="5.4" ry="2.4" fill="#000" opacity=".42" filter="url(#mblur)" transform="rotate(-35 326.8 440.2)"/><path d="M322.20 443.60C320.60 437.90 316.10 436.50 316.10 430.70A6.1 6.1 0 0 1 328.30 430.70C328.30 436.50 323.80 437.90 322.20 443.60Z" fill="#2e84cc" stroke="#2573b4" stroke-width="0.6"/><circle cx="322.20" cy="431.00" r="2.1" fill="#ffffff"/><ellipse cx="446.4" cy="365.8" rx="5.4" ry="2.4" fill="#000" opacity=".42" filter="url(#mblur)" transform="rotate(-35 446.4 365.8)"/><path d="M441.80 369.20C440.20 363.56 435.80 362.10 435.80 356.40A6.0 6.0 0 0 1 447.80 356.40C447.80 362.10 443.40 363.56 441.80 369.20Z" fill="#2e84cc" stroke="#2573b4" stroke-width="0.6"/><circle cx="441.80" cy="356.70" r="2.1" fill="#ffffff"/><ellipse cx="413.0" cy="420.2" rx="5.4" ry="2.4" fill="#000" opacity=".42" filter="url(#mblur)" transform="rotate(-35 413.0 420.2)"/><path d="M408.40 423.60C406.80 418.14 402.40 417.10 402.40 411.40A6.0 6.0 0 0 1 414.40 411.40C414.40 417.10 410.00 418.14 408.40 423.60Z" fill="#2e84cc" stroke="#2573b4" stroke-width="0.6"/><circle cx="408.40" cy="411.70" r="2.1" fill="#ffffff"/><ellipse cx="398.4" cy="454.5" rx="5.4" ry="2.4" fill="#000" opacity=".42" filter="url(#mblur)" transform="rotate(-35 398.4 454.5)"/><path d="M393.80 457.90C392.20 452.35 387.80 451.10 387.80 445.40A6.0 6.0 0 0 1 399.80 445.40C399.80 451.10 395.40 452.35 393.80 457.90Z" fill="#2e84cc" stroke="#2573b4" stroke-width="0.6"/><circle cx="393.80" cy="445.70" r="2.1" fill="#ffffff"/><path d="M405.90 467.60C404.30 462.20 400.20 460.72 400.20 455.30A5.7 5.7 0 0 1 411.60 455.30C411.60 460.72 407.50 462.20 405.90 467.60Z" fill="#2e84cc" stroke="#2573b4" stroke-width="0.6"/><circle cx="405.90" cy="455.60" r="2.1" fill="#ffffff"/><ellipse cx="411.8" cy="465.0" rx="5.4" ry="2.4" fill="#000" opacity=".42" filter="url(#mblur)" transform="rotate(-35 411.8 465.0)"/><path d="M407.20 468.40C405.60 462.64 401.10 461.10 401.10 455.30A6.1 6.1 0 0 1 413.30 455.30C413.30 461.10 408.80 462.64 407.20 468.40Z" fill="#2e84cc" stroke="#2573b4" stroke-width="0.6"/><circle cx="407.20" cy="455.60" r="2.1" fill="#ffffff"/></g></svg>
<span class="t " style="left:6.80px;top:7.05px;font-size:5.2px;color:#f1e9e0;font-weight:700;letter-spacing:-0.274px;">Pages</span>
<span class="t " style="left:40.80px;top:6.23px;font-size:7.5px;color:#b4b2c0;letter-spacing:-0.464px;">index.ejs</span>
<span class="t " style="left:93.50px;top:6.23px;font-size:7.5px;color:#b4b2c0;letter-spacing:-0.448px;">main.ejs</span>
<span class="t " style="left:145.20px;top:6.23px;font-size:7.5px;color:#ffffff;letter-spacing:-0.346px;">listings.ejs</span>
<span class="t " style="left:179.40px;top:6.02px;font-size:7.5px;color:#b4b2c0;">×</span>
<span class="t " style="left:48.60px;top:42.03px;font-size:7.5px;color:#77738f;letter-spacing:-0.453px;">Find Elements</span>
<span class="t " style="left:29.80px;top:58.93px;font-size:7.5px;color:#ffffff;letter-spacing:-0.430px;">App</span>
<span class="t " style="left:44.60px;top:58.93px;font-size:7.5px;color:#6db6cf;letter-spacing:-0.234px;">listings</span>
<span class="t " style="left:34.60px;top:73.73px;font-size:7.5px;color:#e9e8f0;letter-spacing:-0.436px;">Server Connect:</span>
<span class="t " style="left:84.60px;top:73.73px;font-size:7.5px;color:#6db6cf;letter-spacing:-0.401px;">sc_listings</span>
<span class="t " style="left:34.60px;top:88.42px;font-size:7.5px;color:#e9e8f0;letter-spacing:-0.427px;">Data View:</span>
<span class="t " style="left:68.90px;top:88.42px;font-size:7.5px;color:#6db6cf;letter-spacing:-0.296px;">listing_results</span>
<span class="t " style="left:34.60px;top:103.12px;font-size:7.5px;color:#e9e8f0;letter-spacing:-0.356px;">Variable:</span>
<span class="t " style="left:62.70px;top:103.12px;font-size:7.5px;color:#6db6cf;letter-spacing:-0.456px;">market_value_stats</span>
<span class="t " style="left:34.60px;top:117.83px;font-size:7.5px;color:#e9e8f0;letter-spacing:-0.356px;">Variable:</span>
<span class="t " style="left:62.70px;top:117.83px;font-size:7.5px;color:#6db6cf;letter-spacing:-0.319px;">buyer_priority_stats</span>
<span class="t " style="left:34.60px;top:132.52px;font-size:7.5px;color:#e9e8f0;letter-spacing:-0.355px;">Main</span>
<span class="t " style="left:51.90px;top:132.52px;font-size:7.5px;color:#6db6cf;letter-spacing:-0.332px;">listings_page</span>
<span class="t " style="left:447.50px;top:24.62px;font-size:7.5px;color:#8b6cf2;letter-spacing:-0.572px;">Design</span>
<span class="t " style="left:475.40px;top:24.62px;font-size:7.5px;color:#e9e8f0;letter-spacing:-0.679px;">Code</span>
<span class="t " style="left:498.50px;top:24.62px;font-size:7.5px;color:#e9e8f0;letter-spacing:-0.273px;">Split</span>
<span class="t " style="left:197.80px;top:68.77px;font-size:6.6px;color:#e9e8f0;letter-spacing:-0.067px;">App</span>
<span class="t " style="left:793.20px;top:42.12px;font-size:7.5px;color:#77738f;letter-spacing:-0.284px;">Filter Properties</span>
<span class="t " style="left:791.80px;top:60.53px;font-size:7.5px;color:#8b6cf2;letter-spacing:-0.415px;">General</span>
<span class="t " style="left:826.50px;top:60.53px;font-size:7.5px;color:#b9b7c6;letter-spacing:-0.132px;">Attributes</span>
<span class="t " style="left:867.60px;top:60.53px;font-size:7.5px;color:#b9b7c6;letter-spacing:-0.528px;">Events</span>
<span class="t " style="left:788.30px;top:81.78px;font-size:8.0px;color:#ffffff;font-weight:700;letter-spacing:-0.357px;">App Properties</span>
<span class="t " style="left:788.30px;top:103.86px;font-size:6.4px;color:#7a5cf0;font-weight:700;letter-spacing:-0.379px;">App ID</span>
<span class="t " style="left:839.80px;top:102.62px;font-size:7.5px;color:#dad9e4;letter-spacing:-0.220px;">listings</span>
<span class="t " style="left:788.30px;top:124.86px;font-size:6.4px;color:#7a5cf0;font-weight:700;letter-spacing:-0.470px;">Layout Page</span>
<span class="t " style="left:839.80px;top:123.73px;font-size:7.5px;color:#dad9e4;letter-spacing:-0.210px;">layouts/main</span>
<span class="t " style="left:849.00px;top:145.97px;font-size:7.1px;color:#ecebf3;font-weight:700;letter-spacing:-0.193px;">Define Global Data</span>
<span class="t " style="left:845.60px;top:167.27px;font-size:7.1px;color:#ecebf3;font-weight:700;letter-spacing:-0.287px;">Define Query Params</span>
<span class="t " style="left:788.30px;top:192.98px;font-size:8.0px;color:#ffffff;font-weight:700;letter-spacing:-0.497px;">Security</span>
<span class="t " style="left:788.30px;top:214.22px;font-size:6.5px;color:#b9b7c6;letter-spacing:-0.551px;">Access</span>
<span class="t " style="left:839.80px;top:213.52px;font-size:7.5px;color:#dad9e4;letter-spacing:-0.447px;">Public</span>
<span class="t " style="left:788.30px;top:240.38px;font-size:8.0px;color:#ffffff;font-weight:700;letter-spacing:-0.393px;">Server Side Data</span>
<span class="t " style="left:788.30px;top:262.12px;font-size:6.5px;color:#b9b7c6;letter-spacing:-0.306px;">Server Connect</span>
<span class="t " style="left:847.30px;top:282.77px;font-size:7.1px;color:#ecebf3;font-weight:700;letter-spacing:-0.286px;">Select Server Action</span>
<span class="t " style="left:788.30px;top:307.78px;font-size:8.0px;color:#ffffff;font-weight:700;letter-spacing:-0.584px;">CSS Variables</span>
<span class="t " style="left:788.30px;top:333.78px;font-size:8.0px;color:#ffffff;font-weight:700;letter-spacing:-0.327px;">Dynamic Attributes</span>
<span class="t " style="left:788.30px;top:359.78px;font-size:8.0px;color:#ffffff;font-weight:700;letter-spacing:-0.501px;">Dynamic Events</span>
<span class="t " style="left:788.30px;top:385.78px;font-size:8.0px;color:#ffffff;font-weight:700;letter-spacing:-0.504px;">Static Events</span>
<span class="t " style="left:14.10px;top:505.93px;font-size:7.5px;color:#e9e8f0;letter-spacing:-0.340px;">Target:</span>
<span class="t " style="left:37.50px;top:505.93px;font-size:7.5px;color:#e9e8f0;letter-spacing:-0.360px;">Development</span>
<span class="t " style="left:93.30px;top:505.93px;font-size:7.5px;color:#e9e8f0;letter-spacing:-0.427px;">Problems</span>
<span class="t " style="left:129.30px;top:505.93px;font-size:7.5px;color:#e9e8f0;letter-spacing:-0.103px;">Output</span>
<span class="t " style="left:170.80px;top:505.93px;font-size:7.5px;color:#8b6cf2;letter-spacing:-0.530px;">Web Server</span>
<span class="t " style="left:855.50px;top:505.93px;font-size:7.5px;color:#e9e8f0;letter-spacing:-0.578px;">System Check</span>
<span class="t " style="left:743.80px;top:490.48px;font-size:7.6px;color:#ffffff;letter-spacing:-0.558px;">App</span>
<span class="t " style="left:758.40px;top:490.48px;font-size:7.6px;color:#6db6cf;letter-spacing:-0.231px;">listings</span>
<span class="t " style="left:164.00px;top:42.66px;font-size:6.1px;color:#d6d5e3;font-weight:700;">?</span>
<span class="t " style="left:772.70px;top:42.76px;font-size:6.1px;color:#d6d5e3;font-weight:700;">?</span>
<span class="t " style="left:947.70px;top:42.76px;font-size:6.1px;color:#d6d5e3;font-weight:700;">?</span>
<span class="t " style="left:211.90px;top:103.71px;font-size:6.3px;color:#2d6ff0;font-weight:700;letter-spacing:-0.135px;">LISTINGS</span>
<span class="t " style="left:211.60px;top:119.53px;font-size:23.4px;color:#e9ecef;font-weight:700;letter-spacing:-0.260px;">Filter listings from a Server</span>
<span class="t " style="left:211.60px;top:148.93px;font-size:23.4px;color:#e9ecef;font-weight:700;letter-spacing:-0.390px;">Connect API.</span>
<span class="t " style="left:579.90px;top:139.03px;font-size:7.9px;color:#c5c9ce;letter-spacing:-0.146px;">The API returns seeded SQLite rows, while App</span>
<span class="t " style="left:579.90px;top:150.93px;font-size:7.9px;color:#c5c9ce;letter-spacing:-0.077px;">Connect handles responsive client-side filtering</span>
<span class="t " style="left:579.90px;top:162.43px;font-size:7.9px;color:#c5c9ce;letter-spacing:-0.058px;">and sorting.</span>
<span class="t " style="left:221.90px;top:195.53px;font-size:7.9px;color:#e2e5e9;letter-spacing:-0.028px;">Minimum beds</span>
<span class="t " style="left:227.70px;top:213.73px;font-size:7.9px;color:#e2e5e9;letter-spacing:-0.172px;">Any beds</span>
<span class="t " style="left:353.90px;top:195.53px;font-size:7.9px;color:#e2e5e9;letter-spacing:0.100px;">Maximum price</span>
<span class="t " style="left:359.80px;top:213.73px;font-size:7.9px;color:#e2e5e9;letter-spacing:0.029px;">Any budget</span>
<span class="t " style="left:486.20px;top:195.53px;font-size:7.9px;color:#e2e5e9;letter-spacing:-0.231px;">Living area</span>
<span class="t " style="left:492.00px;top:213.73px;font-size:7.9px;color:#e2e5e9;letter-spacing:-0.290px;">Any size</span>
<span class="t " style="left:574.20px;top:195.53px;font-size:7.9px;color:#e2e5e9;letter-spacing:-0.105px;">Market</span>
<span class="t " style="left:580.20px;top:213.73px;font-size:7.9px;color:#e2e5e9;letter-spacing:-0.143px;">All markets</span>
<span class="t " style="left:662.40px;top:195.53px;font-size:7.9px;color:#e2e5e9;letter-spacing:-0.214px;">Price sort</span>
<span class="t " style="left:668.30px;top:213.73px;font-size:7.9px;color:#e2e5e9;letter-spacing:-0.006px;">Low to high</span>
<span class="t " style="left:211.50px;top:252.58px;font-size:7.6px;color:#f1f3f5;font-weight:700;letter-spacing:-0.353px;">12</span>
<span class="t " style="left:220.80px;top:252.58px;font-size:7.6px;color:#adb5bd;letter-spacing:0.114px;">matching homes</span>
<span class="t " style="left:679.70px;top:252.87px;font-size:7.0px;color:#2d6ff0;letter-spacing:-0.165px;">Request matching help</span>
<span class="t " style="left:223.30px;top:288.70px;font-size:10.0px;color:#f1f3f5;font-weight:700;letter-spacing:-0.459px;">Live listing map</span>
<span class="t " style="left:223.30px;top:303.77px;font-size:6.8px;color:#b4bac0;letter-spacing:-0.033px;">Filtered results are passed directly into the Leaflet marker layer.</span>
<span class="t " style="left:544.30px;top:286.80px;font-size:10.0px;color:#f1f3f5;font-weight:700;letter-spacing:-0.335px;">Market intelligence</span>
<span class="t " style="left:720.80px;top:287.66px;font-size:5.6px;color:#ffffff;font-weight:700;letter-spacing:0.096px;">Charts</span>
<span class="t " style="left:544.30px;top:301.17px;font-size:6.8px;color:#b4bac0;letter-spacing:-0.043px;">Charts compare inventory, value, showing demand,</span>
<span class="t " style="left:544.30px;top:311.97px;font-size:6.8px;color:#b4bac0;letter-spacing:0.030px;">and buyer priorities for this seeded portfolio.</span>
<span class="t " style="left:552.00px;top:336.38px;font-size:7.8px;color:#f1f3f5;font-weight:700;letter-spacing:-0.162px;">Inventory by market</span>
<span class="t " style="left:655.30px;top:336.38px;font-size:7.8px;color:#f1f3f5;font-weight:700;letter-spacing:-0.266px;">Average price</span>
<span class="t " style="left:552.30px;top:466.48px;font-size:7.8px;color:#f1f3f5;font-weight:700;letter-spacing:-0.273px;">Showing demand</span>
<span class="t " style="left:655.00px;top:466.48px;font-size:7.8px;color:#f1f3f5;font-weight:700;letter-spacing:-0.243px;">Buyer priorities</span>
<span class="t " style="left:593.60px;top:393.26px;font-size:5.8px;color:#5d646b;letter-spacing:-0.051px;">value 1</span>
<span class="t " style="left:593.60px;top:404.11px;font-size:5.8px;color:#5d646b;letter-spacing:-0.051px;">value 2</span>
<span class="t " style="left:593.60px;top:414.96px;font-size:5.8px;color:#5d646b;letter-spacing:-0.051px;">value 3</span>
<span class="t r685" style="left:0.00px;top:350.61px;font-size:5.9px;color:#555c63;">1,500,000</span>
<span class="t r685" style="left:0.00px;top:360.11px;font-size:5.9px;color:#555c63;">1,000,000</span>
<span class="t r685" style="left:0.00px;top:369.61px;font-size:5.9px;color:#555c63;">500,000</span>
<span class="t r685" style="left:0.00px;top:379.01px;font-size:5.9px;color:#555c63;">0</span>
<span class="t " style="left:555.70px;top:480.46px;font-size:5.6px;color:#555c63;letter-spacing:-0.334px;">40</span>
<span class="t " style="left:659.00px;top:482.76px;font-size:5.8px;color:#555c63;letter-spacing:-0.017px;">value 1</span>
</div>
</body></html>
